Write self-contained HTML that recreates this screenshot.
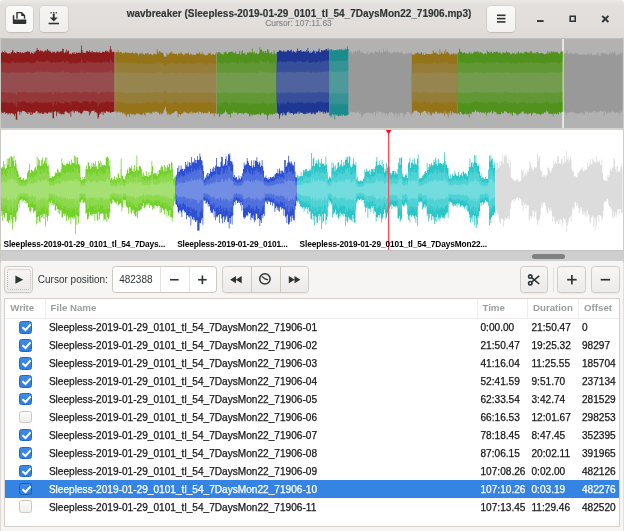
<!DOCTYPE html>
<html><head><meta charset="utf-8"><title>wavbreaker</title>
<style>
html,body{margin:0;padding:0}
body{width:624px;height:531px;overflow:hidden;background:#fff;font-family:"Liberation Sans",sans-serif;color:#2e3436;position:relative}
.win{position:absolute;left:0;top:0;width:624px;height:531px;background:#f6f5f4;will-change:transform;border-radius:4px 4px 0 0;overflow:hidden}
.hdr{position:absolute;left:0;top:0;width:624px;height:38px;background:linear-gradient(#ebe9e6,#e2dfdc 14%,#e1dedb 60%,#dedad7);border-bottom:1px solid #c6bfb8;box-sizing:content-box}
.hb{position:absolute;top:5.5px;height:26px;width:27.7px;box-sizing:border-box;border:0;border-radius:4px;background:linear-gradient(#f6f5f4,#efeeed);box-shadow:0 0 0 .6px rgba(120,105,90,.18),0 1px 1.5px rgba(0,0,0,.10)}
.title{position:absolute;left:0;width:598px;text-align:center;top:8.2px;font-weight:bold;font-size:10px;line-height:11px;white-space:nowrap;-webkit-text-stroke:.15px currentColor}
.sub{position:absolute;left:0;width:597px;text-align:center;top:19.3px;font-size:8.4px;line-height:9px;color:#838686;white-space:nowrap;-webkit-text-stroke:.12px currentColor}
svg{position:absolute;display:block}
.ov{left:0;top:39px}
.sep{position:absolute;left:0;top:127.5px;width:624px;height:2.5px;background:#d6d2ce}
.mainbg{position:absolute;left:1px;top:130px;width:621.5px;height:120.2px;background:#fff;border-right:1px solid #bdbab7}
.lbl{position:absolute;top:239.1px;font-weight:bold;font-size:8.3px;letter-spacing:-.11px;line-height:10px;white-space:nowrap;color:#000}
.sb{position:absolute;left:0;top:250.2px;width:624px;height:11.3px;background:#cecece;border-top:1px solid #c3c3c3;box-sizing:border-box}
.thumb{position:absolute;left:532.3px;top:253.8px;width:32.3px;height:4.8px;border-radius:3px;background:#7e8181}
.tb{position:absolute;left:0;top:261.5px;width:624px;height:37px;background:#f6f5f4}
.btn{position:absolute;top:266.3px;height:26.7px;box-sizing:border-box;border:1px solid #d0cbc6;border-radius:3.5px;background:linear-gradient(#f7f6f5,#edebe9);box-shadow:0 1px 1px rgba(0,0,0,.05)}
.txt{position:absolute;font-size:10px;line-height:12px;white-space:nowrap}
.spin{position:absolute;left:111.5px;top:266.3px;width:105px;height:26.8px;box-sizing:border-box;border:1px solid #cdc7c2;border-radius:3.5px;background:#fff}
.vd{position:absolute;top:0;width:1px;height:100%;background:#e4e1de}
.tbl{position:absolute;left:4.2px;top:297.8px;width:615.4px;height:228.9px;box-sizing:border-box;border:1px solid #d4cfca;background:#fff}
.th{position:absolute;top:301.8px;font-weight:bold;font-size:9.7px;line-height:12px;color:#9a9d9d;white-space:nowrap}
.hl{position:absolute;left:5.2px;top:317.7px;width:613.4px;height:1px;background:#efedeb}
.cd{position:absolute;top:298.8px;width:1px;height:19px;background:#efedeb}
.row{position:absolute;left:5.2px;width:613.4px;height:17.95px;font-size:10.1px;line-height:19.2px;white-space:nowrap;color:#161616;letter-spacing:.01px;-webkit-text-stroke:.25px currentColor}
.row span{position:absolute;top:0}
.row.sel{background:#3584e4;color:#fff}
.cb{left:13.9px;top:2.6px !important;width:12.9px;height:12.7px;box-sizing:border-box;border:1px solid #cdc7c2;border-radius:2.5px;background:linear-gradient(#fbfbfa,#f0efee)}
.cb.on{border-color:#1b6acb;background:linear-gradient(#3f8ae5,#2f7de1)}
.sel .cb.on{border-color:#185fb4}
.cb svg{left:-1px;top:-1px}
.fn{left:43.7px}.tm{left:475.3px}.du{left:526.3px}.of{left:576.8px}
.edge{position:absolute;background:#c9c5c1}
</style></head><body>
<div class="win">
<div class="hdr">
 <div class="hb" style="left:5.5px;background:linear-gradient(#fbfbfa,#f6f6f5)"></div>
 <div class="hb" style="left:40px"></div>
 <div class="hb" style="left:487.4px;background:linear-gradient(#f9f9f8,#f3f2f1)"></div>
 <div class="title">wavbreaker (Sleepless-2019-01-29_0101_tl_54_7DaysMon22_71906.mp3)</div>
 <div class="sub">Cursor: 107:11.63</div>
 <svg width="624" height="38" viewBox="0 0 624 38" style="left:0;top:0">
  <g fill="#2e3436" stroke="none">
   <!-- open icon -->
   <path d="M12.8 15.2h1.5v4.3h12v3.6a1 1 0 0 1-1 1h-11.5a1 1 0 0 1-1-1z"/>
   <path d="M16.3 11.9h5.6l3.3 3.3v3.6h-1.4v-2.9h-2.6v-2.6h-3.5v5.5h-1.4z"/>
   <!-- save icon -->
   <rect x="50.4" y="12.2" width="1.4" height="1.2"/><rect x="53" y="12.2" width="1.4" height="1.2"/><rect x="55.6" y="12.2" width="1.4" height="1.2"/>
   <rect x="52.8" y="13.6" width="1.9" height="5"/>
   <path d="M49.7 17.4h8.1l-4.05 4.2z"/>
   <rect x="48.6" y="22.7" width="10.4" height="1.6"/>
   <!-- menu -->
   <rect x="497" y="14.5" width="8.5" height="1.6"/><rect x="497" y="17.8" width="8.5" height="1.6"/><rect x="497" y="21.1" width="8.5" height="1.6"/>
   <!-- minimize -->
   <rect x="537" y="20.1" width="6.6" height="1.9"/>
   <!-- maximize -->
   <path d="M569.4 15.4h6.6v6.6h-6.6zM571 17v3.4h3.4v-3.4z" fill-rule="evenodd"/>
  </g>
  <path d="M602.2 15.8l6.2 6.2M608.4 15.8l-6.2 6.2" stroke="#2e3436" stroke-width="1.9" fill="none"/>
 </svg>
</div>
<svg class="ov" width="624" height="89" viewBox="0 0 624 89"><rect width="624" height="89" fill="#fff"/><path fill="#cc2728" d="M0 43.4V14.7h.75V13.2h.75V13.9h.75V12.2h.75V13h.75V13.7h.75V11.8h.75V13.6h.75V13.2h.75V14.2h.75V14.6h.75V14.4h.75V13.9h.75V15.3h.75V13.4h.75V13.3h.75V11.3h.75V11.6h.75V14.1h.75V13h.75V14.1h.75V14.3h.75V12.5h.75V13h.75V13.1h.75V12.9h.75V14h.75V13.1h.75V14.2h.75V12.9h.75V13.9h.75V13.7h.75V13.6h.75V13.4h.75V12.7h.75V13h.75V12.3h.75V12.5h.75V12.8h.75V12.7h.75V14.7h.75V13.6h.75V13.4h.75V14.2h.75V14.7h.75V12.4h.75V14h.75V12.2h.75V11.8h.75V9.1h.75V10.9h.75V10.8h.75V12.5h.75V11.4h.75V11.3h.75V12.2h.75V11.8h.75V13.3h.75V12.3h.75V12.2h.75V11.3h.75V12.6h.75V11.2h.75V10.1h.75V11.8h.75V11.4h.75V12.5h.75V12.6h.75V13.8h.75V13.8h.75V12.3h.75V12.9h.75V12.8h.75V13.5h.75V14.2h.75V12.7h.75V12.3h.75V12.4h.75V13.5h.75V12.7h.75V12.6h.75V12.4h.75V11.9h.75V9.8h.75V10.1h.75V13.7h.75V14h.75V12.5h.75V10.4h.75V13.3h.75V12h.75V11.6h.75V15.2h.75V14.2h.75V14.4h.75V15.3h.75V13.7h.75V13.2h.75V15h.75V13.2h.75V15h.75V13.6h.75V13.4h.75V14.3h.75V13.7h.75V13.2h.75V14h.75V13.7h.75V6.6h.75V11h.75V13.6h.75V13.8h.75V14.1h.75V13.5h.75V13.9h.75V11.8h.75V11.9h.75V12.6h.75V12.9h.75V11.6h.75V13.3h.75V12.4h.75V13.5h.75V12.1h.75V12.9h.75V13.6h.75V13.1h.75V13.4h.75V12.4h.75V13.6h.75V13.2h.75V13.5h.75V12.5h.75V13.9h.75V13.6h.75V14.1h.75V13h.75V12.4h.75V13h.75V13.2h.75V12.1h.75V11.6h.75V13h.75V12h.75V12.6h.75V13.8h.75V10.4h.75V7h.75V10.5h.75V12.8h.75V13.2h.75V12.6h.75V12.9h.75V43.4V72.8h-.75V72.8h-.75V73.1h-.75V73.1h-.75V73.3h-.75V74.1h-.75V73.5h-.75V72.5h-.75V73.3h-.75V72.8h-.75V72.3h-.75V72.2h-.75V73.9h-.75V73.7h-.75V72.6h-.75V76.1h-.75V73.2h-.75V72.8h-.75V74.9h-.75V73.7h-.75V75.8h-.75V78.2h-.75V79.7h-.75V74.4h-.75V73.5h-.75V73h-.75V73.4h-.75V71.3h-.75V72.1h-.75V71.8h-.75V72.1h-.75V72.7h-.75V74.4h-.75V76.3h-.75V72.8h-.75V72.6h-.75V72.1h-.75V72.1h-.75V71.7h-.75V72h-.75V71.6h-.75V71.8h-.75V73.4h-.75V73.7h-.75V74.9h-.75V74.6h-.75V74h-.75V73.1h-.75V73.6h-.75V71.8h-.75V73h-.75V71.8h-.75V71.9h-.75V73.8h-.75V71.8h-.75V73.3h-.75V71.6h-.75V72.3h-.75V77.8h-.75V72.7h-.75V74.8h-.75V74.2h-.75V73.7h-.75V73.5h-.75V72.5h-.75V72.5h-.75V72.8h-.75V75.4h-.75V75.2h-.75V74.7h-.75V75.2h-.75V75.6h-.75V74.5h-.75V74.7h-.75V72.4h-.75V74.2h-.75V73.3h-.75V77.3h-.75V72.5h-.75V71.9h-.75V72.9h-.75V79.5h-.75V79.1h-.75V72.5h-.75V73.7h-.75V73.9h-.75V72.8h-.75V73.6h-.75V73.4h-.75V74.4h-.75V74.7h-.75V73.8h-.75V73.5h-.75V73.5h-.75V74.7h-.75V74.9h-.75V74.7h-.75V73.5h-.75V74.8h-.75V74h-.75V74.5h-.75V73.3h-.75V74.4h-.75V72.1h-.75V72.2h-.75V72.8h-.75V74h-.75V74.1h-.75V73.4h-.75V74.8h-.75V76.1h-.75V73h-.75V75.9h-.75V73.4h-.75V74.5h-.75V73.1h-.75V75.1h-.75V74.3h-.75V72.9h-.75V73.1h-.75V71.9h-.75V71.9h-.75V71.8h-.75V72.3h-.75V73.5h-.75V72.8h-.75V75.7h-.75V72.8h-.75V72.2h-.75V72.7h-.75V81h-.75V80.4h-.75V74.4h-.75V77.3h-.75V75.6h-.75V74.7h-.75V74.5h-.75V73.9h-.75V74.4h-.75V75.5h-.75V74.1h-.75V74.4h-.75V75.5h-.75V74h-.75V74h-.75V74.9h-.75V73.2h-.75V72.9h-.75V74.3h-.75V74.1h-.75V72.8h-.75V74.4h-.75V72.7h-.75Z"/><path fill="#d64f51" d="M0 43.4V24.5h.75V23.5h.75V23.9h.75V22.8h.75V23.3h.75V23.8h.75V22.5h.75V23.7h.75V23.5h.75V24.2h.75V24.4h.75V24.3h.75V23.9h.75V24.9h.75V23.6h.75V23.5h.75V22.2h.75V22.4h.75V24.1h.75V23.3h.75V24.1h.75V24.2h.75V23h.75V23.4h.75V23.4h.75V23.3h.75V24h.75V23.4h.75V24.1h.75V23.3h.75V24h.75V23.8h.75V23.7h.75V23.6h.75V23.2h.75V23.3h.75V22.8h.75V23h.75V23.2h.75V23.1h.75V24.4h.75V23.8h.75V23.6h.75V24.1h.75V24.4h.75V22.9h.75V24h.75V22.8h.75V22.6h.75V20.7h.75V21.9h.75V21.9h.75V23h.75V22.3h.75V22.2h.75V22.8h.75V22.5h.75V23.6h.75V22.9h.75V22.8h.75V22.2h.75V23.1h.75V22.1h.75V21.4h.75V22.6h.75V22.3h.75V23h.75V23.1h.75V23.9h.75V23.9h.75V22.9h.75V23.3h.75V23.2h.75V23.7h.75V24.1h.75V23.1h.75V22.9h.75V23h.75V23.6h.75V23.2h.75V23.1h.75V23h.75V22.6h.75V21.3h.75V21.4h.75V23.8h.75V24h.75V23h.75V21.6h.75V23.5h.75V22.7h.75V22.4h.75V24.8h.75V24.1h.75V24.3h.75V24.9h.75V23.8h.75V23.5h.75V24.7h.75V23.5h.75V24.7h.75V23.7h.75V23.6h.75V24.2h.75V23.8h.75V23.5h.75V24h.75V23.8h.75V19.1h.75V22h.75V23.7h.75V23.9h.75V24.1h.75V23.7h.75V24h.75V22.5h.75V22.6h.75V23h.75V23.2h.75V22.4h.75V23.5h.75V22.9h.75V23.7h.75V22.8h.75V23.3h.75V23.7h.75V23.4h.75V23.6h.75V22.9h.75V23.7h.75V23.4h.75V23.6h.75V23h.75V24h.75V23.7h.75V24.1h.75V23.3h.75V22.9h.75V23.3h.75V23.5h.75V22.7h.75V22.4h.75V23.3h.75V22.7h.75V23.1h.75V23.9h.75V21.6h.75V19.4h.75V21.7h.75V23.2h.75V23.5h.75V23.1h.75V23.2h.75V43.4V62.8h-.75V62.8h-.75V63h-.75V63h-.75V63.1h-.75V63.7h-.75V63.3h-.75V62.6h-.75V63.1h-.75V62.8h-.75V62.4h-.75V62.4h-.75V63.5h-.75V63.4h-.75V62.7h-.75V65h-.75V63h-.75V62.8h-.75V64.2h-.75V63.4h-.75V64.8h-.75V66.4h-.75V67.4h-.75V63.9h-.75V63.3h-.75V62.9h-.75V63.2h-.75V61.8h-.75V62.3h-.75V62.1h-.75V62.4h-.75V62.8h-.75V63.9h-.75V65.1h-.75V62.8h-.75V62.6h-.75V62.3h-.75V62.3h-.75V62.1h-.75V62.3h-.75V62h-.75V62.2h-.75V63.2h-.75V63.4h-.75V64.2h-.75V64h-.75V63.6h-.75V63h-.75V63.3h-.75V62.2h-.75V62.9h-.75V62.1h-.75V62.2h-.75V63.5h-.75V62.1h-.75V63.1h-.75V62h-.75V62.5h-.75V66.1h-.75V62.8h-.75V64.1h-.75V63.7h-.75V63.4h-.75V63.3h-.75V62.6h-.75V62.6h-.75V62.8h-.75V64.5h-.75V64.4h-.75V64.1h-.75V64.4h-.75V64.6h-.75V63.9h-.75V64h-.75V62.6h-.75V63.7h-.75V63.1h-.75V65.8h-.75V62.6h-.75V62.2h-.75V62.8h-.75V67.2h-.75V66.9h-.75V62.6h-.75V63.4h-.75V63.5h-.75V62.8h-.75V63.4h-.75V63.2h-.75V63.9h-.75V64.1h-.75V63.5h-.75V63.3h-.75V63.3h-.75V64.1h-.75V64.2h-.75V64.1h-.75V63.3h-.75V64.1h-.75V63.6h-.75V63.9h-.75V63.1h-.75V63.9h-.75V62.4h-.75V62.4h-.75V62.8h-.75V63.6h-.75V63.6h-.75V63.2h-.75V64.1h-.75V65h-.75V62.9h-.75V64.8h-.75V63.2h-.75V63.9h-.75V63h-.75V64.3h-.75V63.8h-.75V62.9h-.75V63h-.75V62.2h-.75V62.2h-.75V62.2h-.75V62.5h-.75V63.2h-.75V62.8h-.75V64.7h-.75V62.8h-.75V62.4h-.75V62.8h-.75V68.2h-.75V67.8h-.75V63.8h-.75V65.8h-.75V64.7h-.75V64.1h-.75V63.9h-.75V63.5h-.75V63.8h-.75V64.6h-.75V63.7h-.75V63.9h-.75V64.6h-.75V63.6h-.75V63.6h-.75V64.2h-.75V63.1h-.75V62.8h-.75V63.8h-.75V63.6h-.75V62.8h-.75V63.8h-.75V62.7h-.75Z"/><path fill="#d66f72" d="M0 43.4V33.9h.75V33.4h.75V33.6h.75V33.1h.75V33.4h.75V33.6h.75V33h.75V33.6h.75V33.4h.75V33.8h.75V33.9h.75V33.8h.75V33.7h.75V34.1h.75V33.5h.75V33.5h.75V32.8h.75V32.9h.75V33.7h.75V33.4h.75V33.7h.75V33.8h.75V33.2h.75V33.4h.75V33.4h.75V33.3h.75V33.7h.75V33.4h.75V33.8h.75V33.3h.75V33.7h.75V33.6h.75V33.6h.75V33.5h.75V33.3h.75V33.4h.75V33.1h.75V33.2h.75V33.3h.75V33.3h.75V33.9h.75V33.6h.75V33.5h.75V33.7h.75V33.9h.75V33.2h.75V33.7h.75V33.1h.75V33h.75V32.1h.75V32.7h.75V32.6h.75V33.2h.75V32.9h.75V32.8h.75V33.1h.75V33h.75V33.5h.75V33.1h.75V33.1h.75V32.8h.75V33.2h.75V32.8h.75V32.4h.75V33h.75V32.8h.75V33.2h.75V33.2h.75V33.6h.75V33.6h.75V33.1h.75V33.3h.75V33.3h.75V33.5h.75V33.8h.75V33.3h.75V33.1h.75V33.2h.75V33.5h.75V33.3h.75V33.2h.75V33.2h.75V33h.75V32.3h.75V32.4h.75V33.6h.75V33.7h.75V33.2h.75V32.5h.75V33.5h.75V33.1h.75V32.9h.75V34.1h.75V33.8h.75V33.8h.75V34.1h.75V33.6h.75V33.4h.75V34h.75V33.4h.75V34h.75V33.5h.75V33.5h.75V33.8h.75V33.6h.75V33.4h.75V33.7h.75V33.6h.75V31.3h.75V32.7h.75V33.6h.75V33.6h.75V33.7h.75V33.5h.75V33.7h.75V33h.75V33h.75V33.2h.75V33.3h.75V32.9h.75V33.5h.75V33.2h.75V33.5h.75V33.1h.75V33.4h.75V33.6h.75V33.4h.75V33.5h.75V33.2h.75V33.6h.75V33.4h.75V33.5h.75V33.2h.75V33.7h.75V33.6h.75V33.7h.75V33.4h.75V33.2h.75V33.4h.75V33.4h.75V33.1h.75V32.9h.75V33.4h.75V33h.75V33.2h.75V33.6h.75V32.5h.75V31.4h.75V32.6h.75V33.3h.75V33.4h.75V33.2h.75V33.3h.75V43.4V53.1h-.75V53.1h-.75V53.2h-.75V53.2h-.75V53.3h-.75V53.5h-.75V53.3h-.75V53h-.75V53.3h-.75V53.1h-.75V52.9h-.75V52.9h-.75V53.5h-.75V53.4h-.75V53h-.75V54.2h-.75V53.2h-.75V53.1h-.75V53.8h-.75V53.4h-.75V54.1h-.75V54.9h-.75V55.4h-.75V53.6h-.75V53.3h-.75V53.2h-.75V53.3h-.75V52.6h-.75V52.9h-.75V52.8h-.75V52.9h-.75V53.1h-.75V53.6h-.75V54.2h-.75V53.1h-.75V53h-.75V52.9h-.75V52.9h-.75V52.7h-.75V52.8h-.75V52.7h-.75V52.8h-.75V53.3h-.75V53.4h-.75V53.8h-.75V53.7h-.75V53.5h-.75V53.2h-.75V53.4h-.75V52.8h-.75V53.2h-.75V52.8h-.75V52.8h-.75V53.4h-.75V52.8h-.75V53.3h-.75V52.7h-.75V52.9h-.75V54.8h-.75V53.1h-.75V53.8h-.75V53.6h-.75V53.4h-.75V53.3h-.75V53h-.75V53h-.75V53.1h-.75V54h-.75V53.9h-.75V53.7h-.75V53.9h-.75V54h-.75V53.7h-.75V53.7h-.75V53h-.75V53.6h-.75V53.3h-.75V54.6h-.75V53h-.75V52.8h-.75V53.1h-.75V55.3h-.75V55.2h-.75V53h-.75V53.4h-.75V53.5h-.75V53.1h-.75V53.4h-.75V53.3h-.75V53.6h-.75V53.7h-.75V53.4h-.75V53.3h-.75V53.3h-.75V53.7h-.75V53.8h-.75V53.7h-.75V53.3h-.75V53.8h-.75V53.5h-.75V53.7h-.75V53.3h-.75V53.6h-.75V52.9h-.75V52.9h-.75V53.1h-.75V53.5h-.75V53.5h-.75V53.3h-.75V53.7h-.75V54.2h-.75V53.2h-.75V54.1h-.75V53.3h-.75V53.7h-.75V53.2h-.75V53.9h-.75V53.6h-.75V53.1h-.75V53.2h-.75V52.8h-.75V52.8h-.75V52.8h-.75V53h-.75V53.3h-.75V53.1h-.75V54.1h-.75V53.1h-.75V52.9h-.75V53.1h-.75V55.8h-.75V55.6h-.75V53.6h-.75V54.6h-.75V54h-.75V53.7h-.75V53.7h-.75V53.5h-.75V53.6h-.75V54h-.75V53.5h-.75V53.6h-.75V54h-.75V53.5h-.75V53.5h-.75V53.8h-.75V53.2h-.75V53.1h-.75V53.6h-.75V53.5h-.75V53.1h-.75V53.6h-.75V53.1h-.75Z"/><path fill="#d6a624" d="M114.75 43.4V14.8h.75V12.6h.75V13.6h.75V12.9h.75V10.8h.75V12.9h.75V14h.75V12.9h.75V13.1h.75V13.8h.75V14.4h.75V13.7h.75V14.3h.75V13.7h.75V13h.75V13.6h.75V13.9h.75V13.6h.75V13.8h.75V14.2h.75V13.8h.75V14.2h.75V14h.75V13h.75V14.1h.75V14.6h.75V14.6h.75V13.7h.75V13.4h.75V14.3h.75V14.4h.75V16.3h.75V15.3h.75V14.2h.75V14.2h.75V14.3h.75V13.3h.75V15.4h.75V14.9h.75V15.9h.75V14.4h.75V14.3h.75V14.7h.75V14h.75V14.1h.75V15.8h.75V15h.75V14.6h.75V15h.75V15.7h.75V16.3h.75V15.2h.75V14.1h.75V15h.75V15.3h.75V15.4h.75V10h.75V12.8h.75V14.3h.75V12.1h.75V12.6h.75V13.7h.75V13.3h.75V13.9h.75V14.2h.75V16.5h.75V17.8h.75V17.4h.75V17.7h.75V13.9h.75V15.5h.75V15.8h.75V13.9h.75V14.5h.75V13.2h.75V12.4h.75V14.7h.75V13.6h.75V14.6h.75V14.8h.75V15.1h.75V14.9h.75V14.6h.75V16.2h.75V15.1h.75V13.8h.75V14.7h.75V14.4h.75V12.9h.75V14.8h.75V15h.75V16.2h.75V15.1h.75V15.8h.75V14.1h.75V14.4h.75V14.2h.75V15h.75V13.6h.75V15.4h.75V15.8h.75V14.2h.75V15.2h.75V16.2h.75V15.4h.75V15.6h.75V15.9h.75V16.1h.75V15.2h.75V14h.75V14.4h.75V15.1h.75V13.3h.75V14h.75V15.2h.75V15h.75V13.1h.75V15.5h.75V14.7h.75V15.6h.75V16.6h.75V16.2h.75V15.8h.75V16.2h.75V14.4h.75V14.3h.75V14.3h.75V13.7h.75V15.4h.75V16.3h.75V14.7h.75V15.1h.75V16.1h.75V16.1h.75V14.5h.75V12.8h.75V43.4V74.7h-.75V74.1h-.75V74.8h-.75V77.6h-.75V74.3h-.75V74.6h-.75V74h-.75V74.7h-.75V75.1h-.75V72.9h-.75V72.6h-.75V73.8h-.75V74.2h-.75V73.9h-.75V74.6h-.75V73.7h-.75V74.1h-.75V74.5h-.75V74.2h-.75V73h-.75V74.6h-.75V73h-.75V73.3h-.75V72.6h-.75V74.6h-.75V73.1h-.75V73.5h-.75V73.9h-.75V73.9h-.75V73.5h-.75V73.4h-.75V74.5h-.75V73.8h-.75V72.6h-.75V74.7h-.75V72.9h-.75V74.3h-.75V74.4h-.75V74.7h-.75V73.7h-.75V74.1h-.75V72.9h-.75V73.6h-.75V72.5h-.75V73.4h-.75V74.7h-.75V74.5h-.75V74.9h-.75V76.4h-.75V74.9h-.75V75.1h-.75V78.3h-.75V73.4h-.75V72h-.75V72.1h-.75V72.5h-.75V73.1h-.75V73.8h-.75V74.1h-.75V74.5h-.75V75h-.75V75.9h-.75V74.8h-.75V75.9h-.75V74.6h-.75V75.8h-.75V73.5h-.75V71.7h-.75V67.9h-.75V69.7h-.75V71.7h-.75V73.9h-.75V74.8h-.75V75.4h-.75V73.6h-.75V75h-.75V75.6h-.75V73.7h-.75V73.5h-.75V72.6h-.75V72.9h-.75V72.8h-.75V72.8h-.75V74.2h-.75V72.7h-.75V72.7h-.75V74.8h-.75V74.6h-.75V73.9h-.75V74.6h-.75V72.9h-.75V74h-.75V73.5h-.75V74h-.75V73.3h-.75V76.9h-.75V75.6h-.75V73.9h-.75V75.7h-.75V75h-.75V76.2h-.75V75.4h-.75V75.8h-.75V75.1h-.75V74.5h-.75V74.7h-.75V74.2h-.75V74.8h-.75V75.7h-.75V76.2h-.75V75.2h-.75V75.1h-.75V75.6h-.75V75.8h-.75V74.2h-.75V75h-.75V78h-.75V75.2h-.75V74.4h-.75V76h-.75V77.7h-.75V75.4h-.75V75.6h-.75V73.4h-.75V74.3h-.75V75.1h-.75V73.2h-.75V72.9h-.75V73.7h-.75V73.5h-.75V72.6h-.75V72.5h-.75V73.4h-.75V73.5h-.75V72.5h-.75V72.2h-.75Z"/><path fill="#d6b44f" d="M114.75 43.4V24.5h.75V23.1h.75V23.7h.75V23.3h.75V21.9h.75V23.3h.75V24h.75V23.2h.75V23.4h.75V23.9h.75V24.3h.75V23.8h.75V24.2h.75V23.8h.75V23.3h.75V23.8h.75V23.9h.75V23.7h.75V23.8h.75V24.1h.75V23.9h.75V24.1h.75V24h.75V23.4h.75V24.1h.75V24.4h.75V24.4h.75V23.8h.75V23.6h.75V24.2h.75V24.3h.75V25.5h.75V24.8h.75V24.1h.75V24.1h.75V24.2h.75V23.5h.75V24.9h.75V24.6h.75V25.2h.75V24.3h.75V24.2h.75V24.4h.75V24h.75V24.1h.75V25.2h.75V24.7h.75V24.4h.75V24.6h.75V25.1h.75V25.5h.75V24.8h.75V24.1h.75V24.6h.75V24.9h.75V24.9h.75V21.3h.75V23.2h.75V24.2h.75V22.7h.75V23.1h.75V23.8h.75V23.5h.75V23.9h.75V24.1h.75V25.6h.75V26.5h.75V26.2h.75V26.4h.75V23.9h.75V25h.75V25.2h.75V23.9h.75V24.3h.75V23.5h.75V23h.75V24.4h.75V23.7h.75V24.4h.75V24.5h.75V24.7h.75V24.6h.75V24.4h.75V25.4h.75V24.7h.75V23.9h.75V24.5h.75V24.3h.75V23.3h.75V24.5h.75V24.6h.75V25.4h.75V24.7h.75V25.2h.75V24.1h.75V24.2h.75V24.1h.75V24.6h.75V23.8h.75V24.9h.75V25.2h.75V24.2h.75V24.8h.75V25.4h.75V24.9h.75V25.1h.75V25.2h.75V25.4h.75V24.8h.75V24h.75V24.3h.75V24.7h.75V23.6h.75V24h.75V24.8h.75V24.7h.75V23.4h.75V25h.75V24.4h.75V25h.75V25.7h.75V25.5h.75V25.2h.75V25.5h.75V24.2h.75V24.2h.75V24.2h.75V23.8h.75V24.9h.75V25.5h.75V24.4h.75V24.7h.75V25.4h.75V25.4h.75V24.3h.75V23.2h.75V43.4V64.1h-.75V63.7h-.75V64.1h-.75V66h-.75V63.8h-.75V64h-.75V63.6h-.75V64.1h-.75V64.3h-.75V62.8h-.75V62.7h-.75V63.5h-.75V63.7h-.75V63.5h-.75V64h-.75V63.4h-.75V63.6h-.75V63.9h-.75V63.8h-.75V63h-.75V64h-.75V62.9h-.75V63.1h-.75V62.7h-.75V64h-.75V63h-.75V63.3h-.75V63.5h-.75V63.5h-.75V63.3h-.75V63.2h-.75V63.9h-.75V63.5h-.75V62.7h-.75V64.1h-.75V62.9h-.75V63.8h-.75V63.8h-.75V64.1h-.75V63.4h-.75V63.7h-.75V62.9h-.75V63.3h-.75V62.6h-.75V63.2h-.75V64h-.75V63.9h-.75V64.2h-.75V65.2h-.75V64.2h-.75V64.3h-.75V66.4h-.75V63.2h-.75V62.3h-.75V62.3h-.75V62.6h-.75V63h-.75V63.5h-.75V63.7h-.75V63.9h-.75V64.2h-.75V64.8h-.75V64.1h-.75V64.9h-.75V64h-.75V64.8h-.75V63.3h-.75V62.1h-.75V59.6h-.75V60.7h-.75V62.1h-.75V63.5h-.75V64.1h-.75V64.5h-.75V63.4h-.75V64.3h-.75V64.7h-.75V63.4h-.75V63.3h-.75V62.7h-.75V62.9h-.75V62.8h-.75V62.8h-.75V63.7h-.75V62.7h-.75V62.7h-.75V64.1h-.75V64h-.75V63.5h-.75V64h-.75V62.9h-.75V63.6h-.75V63.2h-.75V63.6h-.75V63.1h-.75V65.5h-.75V64.6h-.75V63.6h-.75V64.7h-.75V64.3h-.75V65h-.75V64.5h-.75V64.8h-.75V64.3h-.75V63.9h-.75V64.1h-.75V63.7h-.75V64.1h-.75V64.7h-.75V65.1h-.75V64.4h-.75V64.3h-.75V64.6h-.75V64.8h-.75V63.7h-.75V64.3h-.75V66.2h-.75V64.4h-.75V63.9h-.75V64.9h-.75V66h-.75V64.5h-.75V64.6h-.75V63.2h-.75V63.8h-.75V64.3h-.75V63.1h-.75V62.9h-.75V63.4h-.75V63.3h-.75V62.7h-.75V62.6h-.75V63.2h-.75V63.3h-.75V62.6h-.75V62.4h-.75Z"/><path fill="#d8bf72" d="M114.75 43.4V34h.75V33.2h.75V33.6h.75V33.3h.75V32.7h.75V33.3h.75V33.7h.75V33.3h.75V33.4h.75V33.6h.75V33.8h.75V33.6h.75V33.8h.75V33.6h.75V33.4h.75V33.6h.75V33.7h.75V33.6h.75V33.6h.75V33.7h.75V33.6h.75V33.8h.75V33.7h.75V33.4h.75V33.7h.75V33.9h.75V33.9h.75V33.6h.75V33.5h.75V33.8h.75V33.8h.75V34.4h.75V34.1h.75V33.8h.75V33.8h.75V33.8h.75V33.5h.75V34.2h.75V34h.75V34.3h.75V33.8h.75V33.8h.75V33.9h.75V33.7h.75V33.7h.75V34.3h.75V34h.75V33.9h.75V34h.75V34.3h.75V34.5h.75V34.1h.75V33.7h.75V34h.75V34.1h.75V34.2h.75V32.4h.75V33.3h.75V33.8h.75V33.1h.75V33.2h.75V33.6h.75V33.5h.75V33.7h.75V33.7h.75V34.5h.75V34.9h.75V34.8h.75V34.9h.75V33.7h.75V34.2h.75V34.3h.75V33.7h.75V33.9h.75V33.4h.75V33.2h.75V33.9h.75V33.6h.75V33.9h.75V34h.75V34.1h.75V34h.75V33.9h.75V34.4h.75V34.1h.75V33.6h.75V33.9h.75V33.8h.75V33.3h.75V34h.75V34h.75V34.4h.75V34.1h.75V34.3h.75V33.7h.75V33.8h.75V33.7h.75V34h.75V33.6h.75V34.2h.75V34.3h.75V33.8h.75V34.1h.75V34.4h.75V34.1h.75V34.2h.75V34.3h.75V34.4h.75V34.1h.75V33.7h.75V33.8h.75V34.1h.75V33.5h.75V33.7h.75V34.1h.75V34h.75V33.4h.75V34.2h.75V33.9h.75V34.2h.75V34.6h.75V34.4h.75V34.3h.75V34.4h.75V33.8h.75V33.8h.75V33.8h.75V33.6h.75V34.2h.75V34.5h.75V33.9h.75V34h.75V34.4h.75V34.4h.75V33.9h.75V33.3h.75V43.4V53.7h-.75V53.5h-.75V53.8h-.75V54.7h-.75V53.6h-.75V53.7h-.75V53.5h-.75V53.7h-.75V53.9h-.75V53.1h-.75V53h-.75V53.4h-.75V53.6h-.75V53.5h-.75V53.7h-.75V53.4h-.75V53.5h-.75V53.7h-.75V53.6h-.75V53.2h-.75V53.7h-.75V53.2h-.75V53.3h-.75V53h-.75V53.7h-.75V53.2h-.75V53.3h-.75V53.5h-.75V53.5h-.75V53.3h-.75V53.3h-.75V53.6h-.75V53.4h-.75V53h-.75V53.7h-.75V53.1h-.75V53.6h-.75V53.6h-.75V53.7h-.75V53.4h-.75V53.5h-.75V53.1h-.75V53.4h-.75V53h-.75V53.3h-.75V53.7h-.75V53.6h-.75V53.8h-.75V54.3h-.75V53.8h-.75V53.8h-.75V54.9h-.75V53.3h-.75V52.8h-.75V52.9h-.75V53h-.75V53.2h-.75V53.4h-.75V53.5h-.75V53.7h-.75V53.8h-.75V54.1h-.75V53.8h-.75V54.1h-.75V53.7h-.75V54.1h-.75V53.3h-.75V52.7h-.75V51.5h-.75V52.1h-.75V52.8h-.75V53.5h-.75V53.8h-.75V54h-.75V53.4h-.75V53.8h-.75V54h-.75V53.4h-.75V53.3h-.75V53h-.75V53.1h-.75V53.1h-.75V53.1h-.75V53.6h-.75V53.1h-.75V53.1h-.75V53.8h-.75V53.7h-.75V53.5h-.75V53.7h-.75V53.1h-.75V53.5h-.75V53.3h-.75V53.5h-.75V53.3h-.75V54.5h-.75V54h-.75V53.5h-.75V54h-.75V53.8h-.75V54.2h-.75V54h-.75V54.1h-.75V53.9h-.75V53.7h-.75V53.7h-.75V53.6h-.75V53.8h-.75V54.1h-.75V54.2h-.75V53.9h-.75V53.9h-.75V54h-.75V54.1h-.75V53.6h-.75V53.8h-.75V54.8h-.75V53.9h-.75V53.6h-.75V54.1h-.75V54.7h-.75V53.9h-.75V54h-.75V53.3h-.75V53.6h-.75V53.8h-.75V53.2h-.75V53.1h-.75V53.4h-.75V53.3h-.75V53h-.75V53h-.75V53.3h-.75V53.3h-.75V53h-.75V52.9h-.75Z"/><path fill="#74d02a" d="M216.75 43.4V14.6h.75V13.4h.75V12.9h.75V12.9h.75V14.4h.75V13.5h.75V14.9h.75V15h.75V15.9h.75V13.4h.75V13.4h.75V12.7h.75V12.5h.75V14.6h.75V14.9h.75V13.4h.75V12.9h.75V13.3h.75V12.9h.75V12.4h.75V12.2h.75V13.5h.75V13.4h.75V14.3h.75V13.7h.75V11.9h.75V14.8h.75V14.9h.75V15h.75V14.7h.75V11.8h.75V15.7h.75V12.2h.75V14.5h.75V11.3h.75V14h.75V15h.75V13.5h.75V15.6h.75V15.8h.75V13.9h.75V13.1h.75V14.1h.75V13.2h.75V12.6h.75V13.7h.75V13.5h.75V9.5h.75V13h.75V14.5h.75V12.7h.75V14.7h.75V13.8h.75V14.1h.75V15.6h.75V15h.75V14h.75V8.3h.75V10.8h.75V10.6h.75V11.4h.75V13.1h.75V12.3h.75V13.7h.75V11.9h.75V12.3h.75V13.9h.75V10.3h.75V10.4h.75V12.4h.75V14.6h.75V14.2h.75V13.4h.75V13.1h.75V15.5h.75V14.8h.75V11.8h.75V14.3h.75V15.2h.75V14.8h.75V43.4V74.2h-.75V73.9h-.75V75.1h-.75V75.3h-.75V74.4h-.75V75.9h-.75V74.7h-.75V75.2h-.75V75.9h-.75V74.4h-.75V76h-.75V76.8h-.75V80.9h-.75V76.2h-.75V75.6h-.75V75h-.75V75.7h-.75V74.2h-.75V74.4h-.75V73.8h-.75V74.8h-.75V76.3h-.75V75.7h-.75V74.5h-.75V75.4h-.75V75.1h-.75V75h-.75V76.1h-.75V75.4h-.75V76.1h-.75V75.7h-.75V75h-.75V76.8h-.75V76.1h-.75V74.7h-.75V77.2h-.75V77.4h-.75V74.8h-.75V75.3h-.75V73.9h-.75V73.8h-.75V73.6h-.75V74.2h-.75V74.2h-.75V75.2h-.75V73.9h-.75V75.5h-.75V74.1h-.75V74.1h-.75V73.9h-.75V74.8h-.75V74h-.75V75.4h-.75V73.7h-.75V73.8h-.75V73.6h-.75V73.7h-.75V72.4h-.75V73.9h-.75V74.7h-.75V74.1h-.75V78.6h-.75V74.9h-.75V75.6h-.75V75.6h-.75V75.2h-.75V73.6h-.75V73h-.75V71.6h-.75V73.4h-.75V74.3h-.75V74.5h-.75V75.3h-.75V75.4h-.75V74.4h-.75V76.7h-.75V78h-.75V74.1h-.75V75.4h-.75V75.3h-.75Z"/><path fill="#8dd94e" d="M216.75 43.4V24.4h.75V23.6h.75V23.3h.75V23.3h.75V24.2h.75V23.7h.75V24.6h.75V24.7h.75V25.2h.75V23.6h.75V23.6h.75V23.2h.75V23h.75V24.4h.75V24.6h.75V23.6h.75V23.3h.75V23.5h.75V23.3h.75V22.9h.75V22.8h.75V23.7h.75V23.6h.75V24.2h.75V23.8h.75V22.6h.75V24.5h.75V24.6h.75V24.7h.75V24.4h.75V22.6h.75V25.1h.75V22.8h.75V24.4h.75V22.2h.75V24h.75V24.7h.75V23.6h.75V25.1h.75V25.2h.75V24h.75V23.4h.75V24.1h.75V23.5h.75V23.1h.75V23.8h.75V23.7h.75V21h.75V23.3h.75V24.3h.75V23.2h.75V24.5h.75V23.9h.75V24h.75V25h.75V24.6h.75V24h.75V20.2h.75V21.9h.75V21.8h.75V22.3h.75V23.4h.75V22.9h.75V23.8h.75V22.6h.75V22.8h.75V23.9h.75V21.5h.75V21.6h.75V22.9h.75V24.4h.75V24.1h.75V23.6h.75V23.4h.75V25h.75V24.5h.75V22.5h.75V24.2h.75V24.8h.75V24.5h.75V43.4V63.7h-.75V63.5h-.75V64.3h-.75V64.5h-.75V63.9h-.75V64.8h-.75V64.1h-.75V64.4h-.75V64.9h-.75V63.8h-.75V64.9h-.75V65.5h-.75V68.1h-.75V65.1h-.75V64.7h-.75V64.3h-.75V64.7h-.75V63.8h-.75V63.9h-.75V63.5h-.75V64.1h-.75V65.1h-.75V64.7h-.75V63.9h-.75V64.5h-.75V64.3h-.75V64.3h-.75V65h-.75V64.5h-.75V65h-.75V64.7h-.75V64.2h-.75V65.5h-.75V65h-.75V64h-.75V65.7h-.75V65.9h-.75V64.1h-.75V64.4h-.75V63.5h-.75V63.5h-.75V63.3h-.75V63.7h-.75V63.8h-.75V64.4h-.75V63.5h-.75V64.6h-.75V63.7h-.75V63.7h-.75V63.5h-.75V64.1h-.75V63.6h-.75V64.5h-.75V63.4h-.75V63.5h-.75V63.3h-.75V63.4h-.75V62.6h-.75V63.5h-.75V64.1h-.75V63.7h-.75V66.6h-.75V64.2h-.75V64.7h-.75V64.6h-.75V64.4h-.75V63.3h-.75V63h-.75V62h-.75V63.2h-.75V63.8h-.75V63.9h-.75V64.5h-.75V64.5h-.75V63.8h-.75V65.4h-.75V66.2h-.75V63.7h-.75V64.5h-.75V64.4h-.75Z"/><path fill="#a5e072" d="M216.75 43.4V33.9h.75V33.5h.75V33.3h.75V33.3h.75V33.8h.75V33.5h.75V34h.75V34h.75V34.3h.75V33.5h.75V33.5h.75V33.3h.75V33.2h.75V33.9h.75V34h.75V33.5h.75V33.3h.75V33.5h.75V33.3h.75V33.2h.75V33.1h.75V33.5h.75V33.5h.75V33.8h.75V33.6h.75V33h.75V34h.75V34h.75V34h.75V33.9h.75V33h.75V34.3h.75V33.1h.75V33.9h.75V32.8h.75V33.7h.75V34h.75V33.5h.75V34.2h.75V34.3h.75V33.7h.75V33.4h.75V33.7h.75V33.4h.75V33.3h.75V33.6h.75V33.5h.75V32.2h.75V33.4h.75V33.9h.75V33.3h.75V33.9h.75V33.6h.75V33.7h.75V34.2h.75V34h.75V33.7h.75V31.8h.75V32.6h.75V32.6h.75V32.8h.75V33.4h.75V33.2h.75V33.6h.75V33h.75V33.1h.75V33.7h.75V32.5h.75V32.5h.75V33.2h.75V33.9h.75V33.8h.75V33.5h.75V33.4h.75V34.2h.75V34h.75V33h.75V33.8h.75V34.1h.75V34h.75V43.4V53.6h-.75V53.5h-.75V53.9h-.75V53.9h-.75V53.6h-.75V54.1h-.75V53.7h-.75V53.9h-.75V54.1h-.75V53.6h-.75V54.2h-.75V54.4h-.75V55.8h-.75V54.2h-.75V54h-.75V53.8h-.75V54.1h-.75V53.6h-.75V53.6h-.75V53.4h-.75V53.8h-.75V54.3h-.75V54.1h-.75V53.7h-.75V54h-.75V53.9h-.75V53.8h-.75V54.2h-.75V54h-.75V54.2h-.75V54.1h-.75V53.8h-.75V54.4h-.75V54.2h-.75V53.7h-.75V54.6h-.75V54.6h-.75V53.8h-.75V53.9h-.75V53.5h-.75V53.4h-.75V53.4h-.75V53.6h-.75V53.6h-.75V53.9h-.75V53.5h-.75V54h-.75V53.5h-.75V53.5h-.75V53.5h-.75V53.8h-.75V53.5h-.75V54h-.75V53.4h-.75V53.4h-.75V53.4h-.75V53.4h-.75V53h-.75V53.5h-.75V53.7h-.75V53.5h-.75V55h-.75V53.8h-.75V54h-.75V54h-.75V53.9h-.75V53.4h-.75V53.2h-.75V52.7h-.75V53.3h-.75V53.6h-.75V53.6h-.75V53.9h-.75V54h-.75V53.6h-.75V54.4h-.75V54.8h-.75V53.5h-.75V54h-.75V53.9h-.75Z"/><path fill="#2d50d2" d="M276.75 43.4V12.7h.75V13.1h.75V12.6h.75V11.3h.75V11.5h.75V11.4h.75V12.3h.75V12.7h.75V12.5h.75V11.3h.75V12.5h.75V12.4h.75V13.1h.75V11.7h.75V11.2h.75V11.1h.75V12.1h.75V12.2h.75V11h.75V10.8h.75V12.4h.75V13.3h.75V11.7h.75V12.5h.75V13.1h.75V13.7h.75V12.3h.75V9.6h.75V11.5h.75V12.3h.75V11.9h.75V11h.75V11.2h.75V12.8h.75V12.8h.75V12.3h.75V12.3h.75V13h.75V12.2h.75V10.9h.75V12.9h.75V9h.75V12.1h.75V13.6h.75V14.1h.75V12.3h.75V14h.75V12.8h.75V12.4h.75V11h.75V12.5h.75V14.6h.75V12.1h.75V13h.75V12.6h.75V11.8h.75V9.5h.75V13.1h.75V13.2h.75V11h.75V11.3h.75V11.9h.75V11.2h.75V11.1h.75V11.5h.75V10.1h.75V9.9h.75V11.4h.75V9.3h.75V11.4h.75V43.4V73.6h-.75V73.6h-.75V73.8h-.75V72.6h-.75V74.5h-.75V74.3h-.75V73.1h-.75V74.8h-.75V72.3h-.75V73.5h-.75V73h-.75V72.5h-.75V73.8h-.75V71.8h-.75V72.2h-.75V73.5h-.75V73.5h-.75V73.6h-.75V75.3h-.75V75.2h-.75V74.4h-.75V73.5h-.75V74.8h-.75V75.3h-.75V74.5h-.75V73.1h-.75V73.9h-.75V74.2h-.75V74.7h-.75V73.6h-.75V74.4h-.75V75h-.75V75.3h-.75V74.4h-.75V75h-.75V74.3h-.75V73.4h-.75V74h-.75V73.6h-.75V74.8h-.75V72.6h-.75V74.7h-.75V73.3h-.75V74.6h-.75V75.1h-.75V74h-.75V75.1h-.75V76.1h-.75V74.3h-.75V74.4h-.75V74.1h-.75V74.5h-.75V73.6h-.75V74.2h-.75V72.8h-.75V73h-.75V74.1h-.75V76.3h-.75V76.5h-.75V74.4h-.75V76h-.75V73.5h-.75V76.8h-.75V74.3h-.75V74.4h-.75V76.3h-.75V79.7h-.75V74.9h-.75V74.5h-.75V73.4h-.75Z"/><path fill="#5070de" d="M276.75 43.4V23.1h.75V23.4h.75V23h.75V22.2h.75V22.3h.75V22.3h.75V22.9h.75V23.1h.75V23h.75V22.2h.75V23h.75V22.9h.75V23.4h.75V22.5h.75V22.2h.75V22.1h.75V22.7h.75V22.8h.75V22h.75V21.9h.75V22.9h.75V23.5h.75V22.5h.75V23h.75V23.4h.75V23.8h.75V22.9h.75V21.1h.75V22.4h.75V22.8h.75V22.6h.75V22h.75V22.1h.75V23.2h.75V23.2h.75V22.9h.75V22.9h.75V23.3h.75V22.8h.75V22h.75V23.3h.75V20.7h.75V22.8h.75V23.7h.75V24.1h.75V22.9h.75V24h.75V23.2h.75V22.9h.75V22h.75V23h.75V24.4h.75V22.7h.75V23.4h.75V23.1h.75V22.6h.75V21h.75V23.4h.75V23.4h.75V22h.75V22.2h.75V22.6h.75V22.1h.75V22.1h.75V22.3h.75V21.4h.75V21.3h.75V22.3h.75V20.9h.75V22.3h.75V43.4V63.3h-.75V63.3h-.75V63.5h-.75V62.7h-.75V63.9h-.75V63.8h-.75V63h-.75V64.1h-.75V62.5h-.75V63.2h-.75V63h-.75V62.6h-.75V63.4h-.75V62.1h-.75V62.4h-.75V63.3h-.75V63.3h-.75V63.3h-.75V64.5h-.75V64.4h-.75V63.9h-.75V63.2h-.75V64.1h-.75V64.4h-.75V63.9h-.75V63h-.75V63.5h-.75V63.7h-.75V64.1h-.75V63.3h-.75V63.9h-.75V64.3h-.75V64.5h-.75V63.9h-.75V64.2h-.75V63.8h-.75V63.2h-.75V63.6h-.75V63.3h-.75V64.1h-.75V62.7h-.75V64h-.75V63.1h-.75V64h-.75V64.3h-.75V63.6h-.75V64.3h-.75V65h-.75V63.8h-.75V63.8h-.75V63.6h-.75V64h-.75V63.3h-.75V63.7h-.75V62.8h-.75V62.9h-.75V63.7h-.75V65.1h-.75V65.3h-.75V63.8h-.75V64.9h-.75V63.3h-.75V65.5h-.75V63.8h-.75V63.9h-.75V65.1h-.75V67.4h-.75V64.2h-.75V63.9h-.75V63.2h-.75Z"/><path fill="#718ee4" d="M276.75 43.4V33.3h.75V33.4h.75V33.2h.75V32.8h.75V32.9h.75V32.8h.75V33.1h.75V33.3h.75V33.2h.75V32.8h.75V33.2h.75V33.2h.75V33.4h.75V32.9h.75V32.8h.75V32.8h.75V33.1h.75V33.1h.75V32.7h.75V32.7h.75V33.2h.75V33.5h.75V32.9h.75V33.2h.75V33.4h.75V33.6h.75V33.1h.75V32.3h.75V32.9h.75V33.1h.75V33h.75V32.7h.75V32.8h.75V33.3h.75V33.3h.75V33.1h.75V33.1h.75V33.4h.75V33.1h.75V32.7h.75V33.3h.75V32h.75V33.1h.75V33.6h.75V33.7h.75V33.1h.75V33.7h.75V33.3h.75V33.2h.75V32.7h.75V33.2h.75V33.9h.75V33.1h.75V33.4h.75V33.2h.75V33h.75V32.2h.75V33.4h.75V33.4h.75V32.7h.75V32.8h.75V33h.75V32.8h.75V32.7h.75V32.9h.75V32.4h.75V32.4h.75V32.8h.75V32.2h.75V32.8h.75V43.4V53.4h-.75V53.4h-.75V53.4h-.75V53h-.75V53.7h-.75V53.6h-.75V53.2h-.75V53.8h-.75V52.9h-.75V53.3h-.75V53.2h-.75V53h-.75V53.4h-.75V52.8h-.75V52.9h-.75V53.3h-.75V53.3h-.75V53.4h-.75V53.9h-.75V53.9h-.75V53.6h-.75V53.3h-.75V53.8h-.75V53.9h-.75V53.7h-.75V53.2h-.75V53.5h-.75V53.6h-.75V53.7h-.75V53.4h-.75V53.6h-.75V53.8h-.75V53.9h-.75V53.6h-.75V53.8h-.75V53.6h-.75V53.3h-.75V53.5h-.75V53.4h-.75V53.8h-.75V53h-.75V53.7h-.75V53.3h-.75V53.7h-.75V53.8h-.75V53.5h-.75V53.8h-.75V54.2h-.75V53.6h-.75V53.6h-.75V53.5h-.75V53.7h-.75V53.4h-.75V53.5h-.75V53.1h-.75V53.2h-.75V53.5h-.75V54.2h-.75V54.3h-.75V53.6h-.75V54.2h-.75V53.3h-.75V54.4h-.75V53.6h-.75V53.6h-.75V54.3h-.75V55.4h-.75V53.8h-.75V53.7h-.75V53.3h-.75Z"/><path fill="#2ac6c8" d="M329.25 43.4V10.8h.75V10.6h.75V10.4h.75V10h.75V11.7h.75V11h.75V11h.75V11.6h.75V10.9h.75V11.3h.75V10.3h.75V11.2h.75V10.8h.75V10h.75V11.6h.75V10.1h.75V10.6h.75V10.6h.75V11.4h.75V10.6h.75V10.8h.75V9.4h.75V10.7h.75V10.1h.75V7.3h.75V9.9h.75V43.4V75.7h-.75V76.1h-.75V76.7h-.75V75.8h-.75V76.9h-.75V76.7h-.75V76h-.75V75.2h-.75V77.1h-.75V75.6h-.75V77.3h-.75V76.4h-.75V76.6h-.75V77.3h-.75V77.1h-.75V75.4h-.75V76.5h-.75V75.5h-.75V80.5h-.75V75.6h-.75V76.2h-.75V75h-.75V78.4h-.75V76.1h-.75V77.2h-.75V76.8h-.75Z"/><path fill="#4ed2d4" d="M329.25 43.4V21.9h.75V21.7h.75V21.6h.75V21.4h.75V22.5h.75V22h.75V22h.75V22.4h.75V22h.75V22.2h.75V21.5h.75V22.1h.75V21.9h.75V21.4h.75V22.4h.75V21.4h.75V21.8h.75V21.8h.75V22.3h.75V21.8h.75V21.9h.75V21h.75V21.8h.75V21.4h.75V19.6h.75V21.3h.75V43.4V64.7h-.75V65h-.75V65.4h-.75V64.8h-.75V65.5h-.75V65.4h-.75V64.9h-.75V64.4h-.75V65.7h-.75V64.7h-.75V65.7h-.75V65.2h-.75V65.3h-.75V65.8h-.75V65.6h-.75V64.5h-.75V65.3h-.75V64.6h-.75V67.9h-.75V64.7h-.75V65h-.75V64.3h-.75V66.5h-.75V65h-.75V65.7h-.75V65.5h-.75Z"/><path fill="#73dcdf" d="M329.25 43.4V32.6h.75V32.6h.75V32.5h.75V32.4h.75V32.9h.75V32.7h.75V32.7h.75V32.9h.75V32.7h.75V32.8h.75V32.5h.75V32.8h.75V32.6h.75V32.4h.75V32.9h.75V32.4h.75V32.6h.75V32.6h.75V32.8h.75V32.6h.75V32.7h.75V32.2h.75V32.6h.75V32.4h.75V31.5h.75V32.3h.75V43.4V54.1h-.75V54.2h-.75V54.4h-.75V54.1h-.75V54.5h-.75V54.4h-.75V54.1h-.75V53.9h-.75V54.5h-.75V54h-.75V54.6h-.75V54.3h-.75V54.3h-.75V54.6h-.75V54.5h-.75V54h-.75V54.3h-.75V54h-.75V55.6h-.75V54h-.75V54.2h-.75V53.8h-.75V54.9h-.75V54.2h-.75V54.5h-.75V54.4h-.75Z"/><path fill="#dcdcdc" d="M348.75 43.4V13.1h.75V12.7h.75V12.2h.75V13.2h.75V14.7h.75V14.4h.75V12.3h.75V13.8h.75V11.9h.75V11.7h.75V13.3h.75V11.3h.75V12.1h.75V11.6h.75V9.9h.75V13.8h.75V12.1h.75V13.9h.75V13.6h.75V14h.75V14.1h.75V14.2h.75V15h.75V14.8h.75V13.6h.75V12.9h.75V15.2h.75V14.6h.75V14.3h.75V12.8h.75V13.8h.75V13.6h.75V14.1h.75V14.4h.75V13.2h.75V12h.75V12.3h.75V13h.75V13.8h.75V13.3h.75V10.2h.75V12h.75V14.5h.75V12.6h.75V13.9h.75V13.2h.75V9.4h.75V13.1h.75V11.4h.75V12.8h.75V12h.75V10.5h.75V12.7h.75V14h.75V12.6h.75V14.6h.75V14h.75V14.5h.75V14.1h.75V12.8h.75V12.8h.75V12.8h.75V14.3h.75V13.5h.75V13.1h.75V12.4h.75V13.6h.75V13.2h.75V14.3h.75V13.6h.75V12h.75V14.3h.75V14.3h.75V16.3h.75V14.7h.75V15.3h.75V13.7h.75V14.4h.75V14.7h.75V13.2h.75V14.7h.75V14.5h.75V13.2h.75V13.6h.75V43.4V76.3h-.75V75.6h-.75V74.6h-.75V73.2h-.75V73.1h-.75V73h-.75V73.1h-.75V74.9h-.75V75.8h-.75V74.9h-.75V78.7h-.75V75.4h-.75V74h-.75V74.3h-.75V73.3h-.75V73.7h-.75V77.4h-.75V74.7h-.75V74.8h-.75V78.3h-.75V74.2h-.75V73.8h-.75V75.8h-.75V76h-.75V73.9h-.75V74h-.75V72.8h-.75V72.7h-.75V74h-.75V73h-.75V74.7h-.75V74.2h-.75V76.5h-.75V74h-.75V74.6h-.75V75.8h-.75V73.9h-.75V73.7h-.75V72.9h-.75V75.3h-.75V73h-.75V72.9h-.75V72.8h-.75V72.8h-.75V74h-.75V72.2h-.75V74.3h-.75V73.1h-.75V77.5h-.75V72.5h-.75V72.9h-.75V75.7h-.75V74.4h-.75V73.6h-.75V74.4h-.75V74.2h-.75V74.2h-.75V73.3h-.75V73.9h-.75V73.2h-.75V73.8h-.75V74.3h-.75V73.9h-.75V74.8h-.75V75.6h-.75V76h-.75V78.8h-.75V75.2h-.75V73.5h-.75V74.7h-.75V73.6h-.75V72.7h-.75V72.6h-.75V73.7h-.75V73.4h-.75V73.4h-.75V73.2h-.75V73.1h-.75V73.3h-.75V72.9h-.75V73.3h-.75V72.7h-.75V74.1h-.75V74.9h-.75Z"/><path fill="#d6a624" d="M411.75 43.4V15.2h.75V15.7h.75V15.5h.75V15.4h.75V14.3h.75V14.7h.75V14h.75V13.2h.75V14.2h.75V13.8h.75V14.8h.75V14.9h.75V12.9h.75V13.7h.75V15.8h.75V14.2h.75V15.7h.75V15.8h.75V14.6h.75V14.8h.75V15h.75V14.9h.75V15.1h.75V15h.75V15.4h.75V15.1h.75V14.8h.75V15.1h.75V11.3h.75V13.3h.75V13.8h.75V13.9h.75V12.8h.75V15.1h.75V14.5h.75V16h.75V14.7h.75V10.3h.75V14.9h.75V12.7h.75V14.8h.75V13.6h.75V14.9h.75V12h.75V14.7h.75V10.3h.75V13.5h.75V12.8h.75V13.5h.75V14.3h.75V15.4h.75V15.8h.75V14.5h.75V15.2h.75V15.2h.75V14.6h.75V14.1h.75V15.9h.75V14.6h.75V14.7h.75V15.7h.75V43.4V75.2h-.75V74.4h-.75V74.2h-.75V73.7h-.75V74.8h-.75V73.4h-.75V72.7h-.75V74.3h-.75V76.2h-.75V72.1h-.75V74.3h-.75V73.5h-.75V78.2h-.75V74.9h-.75V73.7h-.75V74.9h-.75V72.5h-.75V76.7h-.75V74.3h-.75V73.6h-.75V75.1h-.75V73.8h-.75V73.6h-.75V75.1h-.75V73.6h-.75V74.1h-.75V75h-.75V72.9h-.75V72.6h-.75V73.3h-.75V74.5h-.75V73.5h-.75V75.1h-.75V73.6h-.75V76.4h-.75V74.5h-.75V76.6h-.75V73.2h-.75V72.8h-.75V75.8h-.75V72.4h-.75V74.3h-.75V72h-.75V71.9h-.75V71.5h-.75V72.8h-.75V73.4h-.75V72.6h-.75V74.1h-.75V76.2h-.75V73.9h-.75V73.5h-.75V72.9h-.75V72.3h-.75V71.4h-.75V72h-.75V71.6h-.75V71.4h-.75V72.5h-.75V74.7h-.75V73.4h-.75Z"/><path fill="#d6b44f" d="M411.75 43.4V24.8h.75V25.1h.75V25h.75V24.9h.75V24.2h.75V24.5h.75V24h.75V23.5h.75V24.1h.75V23.9h.75V24.5h.75V24.6h.75V23.3h.75V23.8h.75V25.2h.75V24.1h.75V25.1h.75V25.2h.75V24.4h.75V24.5h.75V24.7h.75V24.6h.75V24.7h.75V24.7h.75V24.9h.75V24.7h.75V24.5h.75V24.7h.75V22.2h.75V23.6h.75V23.8h.75V23.9h.75V23.2h.75V24.7h.75V24.3h.75V25.3h.75V24.4h.75V21.5h.75V24.6h.75V23.1h.75V24.5h.75V23.7h.75V24.6h.75V22.6h.75V24.5h.75V21.6h.75V23.7h.75V23.2h.75V23.7h.75V24.2h.75V24.9h.75V25.2h.75V24.3h.75V24.8h.75V24.8h.75V24.4h.75V24.1h.75V25.3h.75V24.4h.75V24.5h.75V25.1h.75V43.4V64.4h-.75V63.9h-.75V63.7h-.75V63.4h-.75V64.1h-.75V63.2h-.75V62.8h-.75V63.8h-.75V65h-.75V62.3h-.75V63.8h-.75V63.3h-.75V66.4h-.75V64.2h-.75V63.4h-.75V64.2h-.75V62.6h-.75V65.4h-.75V63.8h-.75V63.3h-.75V64.3h-.75V63.5h-.75V63.3h-.75V64.3h-.75V63.3h-.75V63.7h-.75V64.3h-.75V62.8h-.75V62.7h-.75V63.1h-.75V63.9h-.75V63.2h-.75V64.3h-.75V63.3h-.75V65.1h-.75V63.9h-.75V65.3h-.75V63.1h-.75V62.8h-.75V64.8h-.75V62.5h-.75V63.8h-.75V62.3h-.75V62.2h-.75V61.9h-.75V62.8h-.75V63.2h-.75V62.7h-.75V63.6h-.75V65h-.75V63.5h-.75V63.3h-.75V62.9h-.75V62.4h-.75V61.9h-.75V62.3h-.75V62h-.75V61.9h-.75V62.6h-.75V64.1h-.75V63.2h-.75Z"/><path fill="#d8bf72" d="M411.75 43.4V34.1h.75V34.2h.75V34.2h.75V34.2h.75V33.8h.75V33.9h.75V33.7h.75V33.4h.75V33.8h.75V33.6h.75V34h.75V34h.75V33.3h.75V33.6h.75V34.3h.75V33.8h.75V34.3h.75V34.3h.75V33.9h.75V33.9h.75V34h.75V34h.75V34.1h.75V34h.75V34.1h.75V34h.75V34h.75V34.1h.75V32.8h.75V33.5h.75V33.6h.75V33.7h.75V33.3h.75V34.1h.75V33.9h.75V34.4h.75V33.9h.75V32.5h.75V34h.75V33.3h.75V33.9h.75V33.6h.75V34h.75V33h.75V33.9h.75V32.5h.75V33.5h.75V33.3h.75V33.5h.75V33.8h.75V34.2h.75V34.3h.75V33.9h.75V34.1h.75V34.1h.75V33.9h.75V33.7h.75V34.3h.75V33.9h.75V33.9h.75V34.3h.75V43.4V53.9h-.75V53.6h-.75V53.6h-.75V53.4h-.75V53.8h-.75V53.3h-.75V53.1h-.75V53.6h-.75V54.2h-.75V52.9h-.75V53.6h-.75V53.3h-.75V54.9h-.75V53.8h-.75V53.4h-.75V53.8h-.75V53h-.75V54.4h-.75V53.6h-.75V53.4h-.75V53.9h-.75V53.4h-.75V53.4h-.75V53.9h-.75V53.4h-.75V53.5h-.75V53.8h-.75V53.1h-.75V53h-.75V53.3h-.75V53.6h-.75V53.3h-.75V53.9h-.75V53.4h-.75V54.3h-.75V53.7h-.75V54.4h-.75V53.2h-.75V53.1h-.75V54.1h-.75V53h-.75V53.6h-.75V52.9h-.75V52.8h-.75V52.7h-.75V53.1h-.75V53.3h-.75V53.1h-.75V53.5h-.75V54.2h-.75V53.5h-.75V53.3h-.75V53.1h-.75V52.9h-.75V52.6h-.75V52.9h-.75V52.7h-.75V52.6h-.75V53h-.75V53.7h-.75V53.3h-.75Z"/><path fill="#74d02a" d="M457.5 43.4V13.8h.75V13.6h.75V9.8h.75V11.8h.75V13h.75V12.8h.75V13.9h.75V13.4h.75V14h.75V13h.75V14.4h.75V14.4h.75V14.3h.75V15h.75V14.6h.75V13.6h.75V12.8h.75V15.1h.75V13.7h.75V14.9h.75V14.3h.75V13.3h.75V12.3h.75V13.6h.75V12.7h.75V12.8h.75V12h.75V13.7h.75V12.4h.75V14.2h.75V13h.75V13.6h.75V13.9h.75V14.6h.75V15.5h.75V14.6h.75V14.5h.75V14.1h.75V15.3h.75V11.2h.75V13h.75V12.9h.75V13.7h.75V13.6h.75V12.8h.75V12.6h.75V14.5h.75V13.5h.75V13.2h.75V13h.75V13.5h.75V12.3h.75V12.8h.75V12.9h.75V14h.75V12.7h.75V14h.75V13.6h.75V14.4h.75V15.2h.75V13h.75V13.5h.75V14.3h.75V13.4h.75V13.9h.75V12h.75V12.9h.75V14.1h.75V13h.75V13.9h.75V15.5h.75V14.4h.75V15.3h.75V13.7h.75V14.4h.75V13.5h.75V15.3h.75V14.9h.75V14.6h.75V13.2h.75V14.8h.75V12.3h.75V14.3h.75V14.2h.75V13.6h.75V13.8h.75V14.2h.75V14.9h.75V13.4h.75V13.1h.75V13.1h.75V12.5h.75V12.9h.75V13.8h.75V14.1h.75V12.7h.75V14.3h.75V12.3h.75V12.2h.75V13.6h.75V14.2h.75V14.5h.75V14h.75V13.3h.75V14.9h.75V13.1h.75V12.7h.75V13.7h.75V13.7h.75V14.7h.75V14.1h.75V13.9h.75V14.3h.75V14.3h.75V14.6h.75V15.3h.75V15.2h.75V15h.75V14.2h.75V14.7h.75V11.7h.75V14.5h.75V13h.75V14.4h.75V12.7h.75V12.6h.75V13.2h.75V12.1h.75V13.4h.75V13h.75V13.3h.75V12.8h.75V13.6h.75V12.7h.75V14h.75V15.1h.75V14.4h.75V12.9h.75V12.2h.75V12.8h.75V11.9h.75V43.4V73.3h-.75V72.8h-.75V73.2h-.75V74.1h-.75V73.2h-.75V72.9h-.75V75.4h-.75V74.3h-.75V75.3h-.75V75.3h-.75V74.2h-.75V74.9h-.75V73.6h-.75V77.2h-.75V75h-.75V75.3h-.75V74h-.75V75.3h-.75V75h-.75V74.2h-.75V72.2h-.75V73h-.75V71.6h-.75V73.7h-.75V72.9h-.75V73.4h-.75V74.9h-.75V74.7h-.75V74.5h-.75V75.4h-.75V75.9h-.75V75.1h-.75V75.3h-.75V74.7h-.75V74.7h-.75V75.2h-.75V74.1h-.75V74.2h-.75V73.7h-.75V73.5h-.75V74.6h-.75V74.8h-.75V76.7h-.75V73.9h-.75V74.5h-.75V74.2h-.75V74.7h-.75V75.5h-.75V74.7h-.75V73.8h-.75V74.5h-.75V75h-.75V73.8h-.75V72.2h-.75V73h-.75V72.6h-.75V74.7h-.75V74.1h-.75V74.9h-.75V75h-.75V76.8h-.75V75.1h-.75V75.8h-.75V74.5h-.75V73.7h-.75V73.8h-.75V73.2h-.75V76.9h-.75V75.5h-.75V73.6h-.75V75.1h-.75V73.6h-.75V74.3h-.75V74.7h-.75V73.9h-.75V72.9h-.75V72.6h-.75V72.4h-.75V71.9h-.75V74.3h-.75V74.1h-.75V74.6h-.75V73.1h-.75V75.2h-.75V74.9h-.75V75.6h-.75V75h-.75V75.5h-.75V74.6h-.75V73.6h-.75V72.9h-.75V73h-.75V71.9h-.75V73.8h-.75V74.8h-.75V71.7h-.75V73.3h-.75V72.9h-.75V74.2h-.75V72.7h-.75V74h-.75V74h-.75V76.5h-.75V73h-.75V75h-.75V73.4h-.75V73.8h-.75V73.2h-.75V74.2h-.75V73.5h-.75V73h-.75V73.7h-.75V73.2h-.75V72.6h-.75V72.4h-.75V73.5h-.75V71.2h-.75V71.6h-.75V73.1h-.75V73.6h-.75V73h-.75V72.8h-.75V75.1h-.75V75.1h-.75V73.8h-.75V78.6h-.75V75.1h-.75V74.8h-.75V75.9h-.75V74.8h-.75V74.2h-.75V74.9h-.75V75.2h-.75V75.7h-.75V75.2h-.75V74.4h-.75V72.7h-.75V73h-.75V75.7h-.75V73.9h-.75V74.6h-.75Z"/><path fill="#8dd94e" d="M457.5 43.4V23.9h.75V23.7h.75V21.2h.75V22.6h.75V23.4h.75V23.2h.75V23.9h.75V23.6h.75V24h.75V23.3h.75V24.3h.75V24.2h.75V24.2h.75V24.6h.75V24.4h.75V23.7h.75V23.2h.75V24.8h.75V23.8h.75V24.6h.75V24.2h.75V23.6h.75V22.9h.75V23.7h.75V23.1h.75V23.2h.75V22.7h.75V23.8h.75V22.9h.75V24.1h.75V23.3h.75V23.7h.75V23.9h.75V24.4h.75V25h.75V24.4h.75V24.3h.75V24.1h.75V24.9h.75V22.1h.75V23.3h.75V23.3h.75V23.8h.75V23.7h.75V23.2h.75V23.1h.75V24.3h.75V23.7h.75V23.5h.75V23.4h.75V23.7h.75V22.9h.75V23.2h.75V23.3h.75V24h.75V23.1h.75V24h.75V23.8h.75V24.3h.75V24.8h.75V23.3h.75V23.7h.75V24.2h.75V23.6h.75V23.9h.75V22.7h.75V23.3h.75V24h.75V23.4h.75V24h.75V25h.75V24.3h.75V24.8h.75V23.8h.75V24.2h.75V23.7h.75V24.9h.75V24.6h.75V24.4h.75V23.5h.75V24.5h.75V22.9h.75V24.2h.75V24.1h.75V23.8h.75V23.9h.75V24.1h.75V24.6h.75V23.6h.75V23.4h.75V23.4h.75V23h.75V23.3h.75V23.9h.75V24.1h.75V23.2h.75V24.2h.75V22.9h.75V22.8h.75V23.7h.75V24.1h.75V24.3h.75V24h.75V23.6h.75V24.6h.75V23.4h.75V23.1h.75V23.8h.75V23.8h.75V24.4h.75V24h.75V23.9h.75V24.2h.75V24.2h.75V24.4h.75V24.9h.75V24.8h.75V24.7h.75V24.1h.75V24.4h.75V22.5h.75V24.4h.75V23.4h.75V24.3h.75V23.1h.75V23.1h.75V23.5h.75V22.8h.75V23.6h.75V23.3h.75V23.5h.75V23.2h.75V23.7h.75V23.1h.75V24h.75V24.7h.75V24.2h.75V23.2h.75V22.8h.75V23.2h.75V22.6h.75V43.4V63.1h-.75V62.8h-.75V63.1h-.75V63.7h-.75V63.1h-.75V62.9h-.75V64.5h-.75V63.8h-.75V64.5h-.75V64.5h-.75V63.8h-.75V64.2h-.75V63.3h-.75V65.7h-.75V64.3h-.75V64.5h-.75V63.6h-.75V64.4h-.75V64.3h-.75V63.7h-.75V62.4h-.75V62.9h-.75V62h-.75V63.4h-.75V62.9h-.75V63.2h-.75V64.2h-.75V64.1h-.75V63.9h-.75V64.5h-.75V64.8h-.75V64.3h-.75V64.4h-.75V64.1h-.75V64.1h-.75V64.4h-.75V63.6h-.75V63.7h-.75V63.4h-.75V63.2h-.75V64h-.75V64.1h-.75V65.4h-.75V63.6h-.75V63.9h-.75V63.7h-.75V64.1h-.75V64.6h-.75V64h-.75V63.4h-.75V63.9h-.75V64.3h-.75V63.5h-.75V62.4h-.75V62.9h-.75V62.7h-.75V64h-.75V63.7h-.75V64.2h-.75V64.2h-.75V65.4h-.75V64.3h-.75V64.8h-.75V63.9h-.75V63.4h-.75V63.4h-.75V63h-.75V65.5h-.75V64.6h-.75V63.3h-.75V64.3h-.75V63.3h-.75V63.8h-.75V64h-.75V63.5h-.75V62.9h-.75V62.7h-.75V62.6h-.75V62.2h-.75V63.8h-.75V63.6h-.75V64h-.75V63h-.75V64.4h-.75V64.2h-.75V64.7h-.75V64.2h-.75V64.6h-.75V64h-.75V63.3h-.75V62.9h-.75V62.9h-.75V62.2h-.75V63.5h-.75V64.1h-.75V62.1h-.75V63.1h-.75V62.9h-.75V63.7h-.75V62.7h-.75V63.6h-.75V63.6h-.75V65.2h-.75V62.9h-.75V64.2h-.75V63.2h-.75V63.4h-.75V63.1h-.75V63.7h-.75V63.3h-.75V62.9h-.75V63.4h-.75V63.1h-.75V62.7h-.75V62.5h-.75V63.2h-.75V61.7h-.75V62h-.75V63h-.75V63.3h-.75V62.9h-.75V62.8h-.75V64.3h-.75V64.3h-.75V63.5h-.75V66.6h-.75V64.3h-.75V64.1h-.75V64.9h-.75V64.2h-.75V63.7h-.75V64.2h-.75V64.4h-.75V64.7h-.75V64.4h-.75V63.9h-.75V62.7h-.75V62.9h-.75V64.7h-.75V63.5h-.75V64h-.75Z"/><path fill="#a5e072" d="M457.5 43.4V33.6h.75V33.6h.75V32.3h.75V33h.75V33.4h.75V33.3h.75V33.7h.75V33.5h.75V33.7h.75V33.4h.75V33.8h.75V33.8h.75V33.8h.75V34h.75V33.9h.75V33.6h.75V33.3h.75V34.1h.75V33.6h.75V34h.75V33.8h.75V33.5h.75V33.2h.75V33.6h.75V33.3h.75V33.3h.75V33h.75V33.6h.75V33.2h.75V33.8h.75V33.4h.75V33.6h.75V33.7h.75V33.9h.75V34.2h.75V33.9h.75V33.9h.75V33.7h.75V34.1h.75V32.8h.75V33.4h.75V33.3h.75V33.6h.75V33.6h.75V33.3h.75V33.2h.75V33.9h.75V33.5h.75V33.4h.75V33.4h.75V33.5h.75V33.1h.75V33.3h.75V33.3h.75V33.7h.75V33.3h.75V33.7h.75V33.6h.75V33.8h.75V34.1h.75V33.4h.75V33.5h.75V33.8h.75V33.5h.75V33.7h.75V33h.75V33.3h.75V33.7h.75V33.4h.75V33.7h.75V34.2h.75V33.8h.75V34.1h.75V33.6h.75V33.8h.75V33.5h.75V34.1h.75V34h.75V33.9h.75V33.4h.75V34h.75V33.1h.75V33.8h.75V33.8h.75V33.6h.75V33.6h.75V33.8h.75V34h.75V33.5h.75V33.4h.75V33.4h.75V33.2h.75V33.3h.75V33.6h.75V33.7h.75V33.3h.75V33.8h.75V33.1h.75V33.1h.75V33.6h.75V33.8h.75V33.9h.75V33.7h.75V33.5h.75V34h.75V33.4h.75V33.3h.75V33.6h.75V33.6h.75V33.9h.75V33.7h.75V33.7h.75V33.8h.75V33.8h.75V33.9h.75V34.1h.75V34.1h.75V34h.75V33.8h.75V33.9h.75V32.9h.75V33.9h.75V33.4h.75V33.8h.75V33.3h.75V33.2h.75V33.4h.75V33.1h.75V33.5h.75V33.4h.75V33.5h.75V33.3h.75V33.6h.75V33.3h.75V33.7h.75V34.1h.75V33.8h.75V33.3h.75V33.1h.75V33.3h.75V33h.75V43.4V53.3h-.75V53.1h-.75V53.2h-.75V53.5h-.75V53.2h-.75V53.1h-.75V54h-.75V53.6h-.75V53.9h-.75V53.9h-.75V53.6h-.75V53.8h-.75V53.4h-.75V54.6h-.75V53.8h-.75V53.9h-.75V53.5h-.75V53.9h-.75V53.8h-.75V53.5h-.75V52.9h-.75V53.2h-.75V52.7h-.75V53.4h-.75V53.1h-.75V53.3h-.75V53.8h-.75V53.7h-.75V53.7h-.75V54h-.75V54.1h-.75V53.9h-.75V53.9h-.75V53.7h-.75V53.7h-.75V53.9h-.75V53.5h-.75V53.6h-.75V53.4h-.75V53.3h-.75V53.7h-.75V53.8h-.75V54.4h-.75V53.5h-.75V53.7h-.75V53.6h-.75V53.7h-.75V54h-.75V53.7h-.75V53.4h-.75V53.7h-.75V53.8h-.75V53.4h-.75V52.9h-.75V53.2h-.75V53h-.75V53.7h-.75V53.5h-.75V53.8h-.75V53.8h-.75V54.4h-.75V53.9h-.75V54.1h-.75V53.7h-.75V53.4h-.75V53.4h-.75V53.2h-.75V54.5h-.75V54h-.75V53.4h-.75V53.9h-.75V53.4h-.75V53.6h-.75V53.7h-.75V53.5h-.75V53.1h-.75V53h-.75V53h-.75V52.8h-.75V53.6h-.75V53.5h-.75V53.7h-.75V53.2h-.75V53.9h-.75V53.8h-.75V54h-.75V53.8h-.75V54h-.75V53.7h-.75V53.4h-.75V53.1h-.75V53.2h-.75V52.8h-.75V53.4h-.75V53.8h-.75V52.7h-.75V53.3h-.75V53.1h-.75V53.5h-.75V53.1h-.75V53.5h-.75V53.5h-.75V54.3h-.75V53.2h-.75V53.8h-.75V53.3h-.75V53.4h-.75V53.2h-.75V53.5h-.75V53.3h-.75V53.2h-.75V53.4h-.75V53.2h-.75V53h-.75V53h-.75V53.3h-.75V52.6h-.75V52.7h-.75V53.2h-.75V53.4h-.75V53.2h-.75V53.1h-.75V53.9h-.75V53.9h-.75V53.4h-.75V55h-.75V53.9h-.75V53.8h-.75V54.1h-.75V53.8h-.75V53.6h-.75V53.8h-.75V53.9h-.75V54.1h-.75V53.9h-.75V53.6h-.75V53.1h-.75V53.2h-.75V54.1h-.75V53.5h-.75V53.7h-.75Z"/><path fill="#dcdcdc" d="M563.25 43.4V14.5h.75V14.6h.75V14.7h.75V14.5h.75V13.6h.75V11h.75V14.5h.75V15.5h.75V13.4h.75V13.7h.75V15.2h.75V13.6h.75V14.7h.75V15.7h.75V14h.75V15.1h.75V13.5h.75V13.8h.75V14.6h.75V14.9h.75V15.2h.75V15.6h.75V15.5h.75V15.4h.75V15.7h.75V15.5h.75V15.8h.75V14.8h.75V15.6h.75V16.6h.75V15.5h.75V16.1h.75V14.8h.75V15.3h.75V13.9h.75V15.8h.75V15.5h.75V14h.75V15.7h.75V16.6h.75V15.9h.75V15.6h.75V16.2h.75V15.5h.75V16.3h.75V13.9h.75V13.9h.75V16.6h.75V16.8h.75V17.2h.75V14.2h.75V14.1h.75V13.5h.75V14.6h.75V14.6h.75V14.1h.75V15.4h.75V14.1h.75V15.4h.75V15.7h.75V15.8h.75V13.9h.75V15.6h.75V13.2h.75V15h.75V13h.75V14.7h.75V13.7h.75V11.8h.75V14.6h.75V16.2h.75V16.8h.75V14.6h.75V15.6h.75V16h.75V14.8h.75V13.3h.75V14.8h.75V13.5h.75V43.4V71.2h-.75V73h-.75V73.8h-.75V71.9h-.75V76.5h-.75V73.7h-.75V73.2h-.75V73.6h-.75V72.9h-.75V74h-.75V73.8h-.75V72.4h-.75V72.9h-.75V71.3h-.75V72.8h-.75V73.5h-.75V73.1h-.75V74.6h-.75V72.8h-.75V73.9h-.75V73.8h-.75V75.4h-.75V72.6h-.75V72.2h-.75V77.1h-.75V71.6h-.75V73.1h-.75V71.9h-.75V72.3h-.75V71.6h-.75V72.9h-.75V72.1h-.75V73.9h-.75V73.1h-.75V73h-.75V73.9h-.75V72.1h-.75V72.1h-.75V72.3h-.75V73.4h-.75V72.8h-.75V73.5h-.75V74.1h-.75V73.4h-.75V72.8h-.75V74.4h-.75V72.7h-.75V73.4h-.75V72.6h-.75V72h-.75V75.8h-.75V73.7h-.75V75.3h-.75V73.9h-.75V72.7h-.75V74.1h-.75V74h-.75V74.2h-.75V74.8h-.75V74.3h-.75V75h-.75V74.1h-.75V74h-.75V75.6h-.75V73.1h-.75V73.2h-.75V74.2h-.75V72.7h-.75V72.7h-.75V72.9h-.75V73.4h-.75V73.4h-.75V74.1h-.75V74.1h-.75V76.3h-.75V73.4h-.75V73.7h-.75V72.7h-.75V71.9h-.75Z"/><rect x="114.55" y="10.4" width=".6" height="66.0" fill="#fff" fill-opacity=".5"/><rect x="216.35" y="10.4" width=".6" height="66.0" fill="#fff" fill-opacity=".5"/><rect x="348.55" y="10.4" width=".6" height="66.0" fill="#fff" fill-opacity=".5"/><rect x="0" y="0" width="562.4" height="89" fill="#000" fill-opacity=".3"/><rect x="563.7" y="0" width="61" height="89" fill="#000" fill-opacity=".3"/></svg>
<div class="sep"></div>
<div class="mainbg"></div>
<svg width="624" height="120" viewBox="0 0 624 120" style="left:0;top:130px"><path fill="#74d02a" d="M0 59.6V33h.75V37.4h.75V38.6h.75V36.8h.75V31.1h.75V37.6h.75V34h.75V39.2h.75V38.1h.75V28.7h.75V34.8h.75V28.4h.75V27.7h.75V36.8h.75V26.3h.75V26.4h.75V26.9h.75V30.8h.75V26.1h.75V36.3h.75V29.8h.75V33.7h.75V38.8h.75V40.9h.75V43.9h.75V48h.75V46.8h.75V46.8h.75V49.6h.75V50.1h.75V48.6h.75V47.7h.75V50.4h.75V48.7h.75V49.9h.75V48.7h.75V43.1h.75V41.1h.75V40.2h.75V33.7h.75V42.9h.75V39.5h.75V40h.75V40.9h.75V41.6h.75V40.2h.75V37.7h.75V36.7h.75V40h.75V26.8h.75V35.4h.75V28.8h.75V30.1h.75V35.9h.75V35.7h.75V29.7h.75V27.6h.75V34.4h.75V32.7h.75V30.6h.75V27.6h.75V33.5h.75V27.4h.75V35.7h.75V35h.75V41.7h.75V47.7h.75V47.8h.75V47.8h.75V46h.75V46.8h.75V47h.75V45.9h.75V41.8h.75V43.8h.75V42.7h.75V38.8h.75V40h.75V42.6h.75V42.2h.75V41.9h.75V38.9h.75V28.3h.75V33.3h.75V34.6h.75V35.1h.75V35.6h.75V35.5h.75V34.1h.75V32h.75V34h.75V33.7h.75V30.8h.75V33.4h.75V34.9h.75V29.6h.75V32.5h.75V33.3h.75V33h.75V25.6h.75V26.4h.75V34.3h.75V27.2h.75V27.6h.75V33.9h.75V34.5h.75V35.5h.75V47.4h.75V50.3h.75V50h.75V47.3h.75V49.1h.75V46.9h.75V49h.75V39.1h.75V35.4h.75V39.2h.75V32.1h.75V32.8h.75V36.1h.75V38.9h.75V36.8h.75V32.7h.75V36.9h.75V32.7h.75V33.9h.75V36.8h.75V31.3h.75V36h.75V38.5h.75V38.9h.75V31.1h.75V33.2h.75V30.5h.75V37.1h.75V32.5h.75V35.1h.75V35.4h.75V35.3h.75V34.8h.75V35.8h.75V27.5h.75V27.2h.75V26.6h.75V28.1h.75V36.3h.75V30.2h.75V49.6h.75V47.8h.75V48.3h.75V50.5h.75V48.9h.75V46.2h.75V49.4h.75V49.9h.75V47.6h.75V48.5h.75V43.1h.75V44.2h.75V48h.75V48.5h.75V28.4h.75V45.3h.75V45.9h.75V48.7h.75V49.2h.75V49.6h.75V45.8h.75V44h.75V40.2h.75V38.6h.75V43.3h.75V37.1h.75V37.8h.75V38.5h.75V35.8h.75V41h.75V38.6h.75V42h.75V35h.75V40.7h.75V37h.75V25.4h.75V39.7h.75V40.6h.75V35.8h.75V36.3h.75V36.8h.75V38.4h.75V43.6h.75V46.4h.75V42.6h.75V45.2h.75V46h.75V46h.75V41.3h.75V46h.75V47.1h.75V42h.75V45.4h.75V44.9h.75V41.9h.75V31.2h.75V36h.75V44.1h.75V43.8h.75V43h.75V43.2h.75V43.8h.75V46h.75V41.1h.75V44.1h.75V39.9h.75V40.3h.75V37.4h.75V35.6h.75V36.3h.75V39.6h.75V41.5h.75V35h.75V37h.75V41h.75V37.5h.75V34.9h.75V37.2h.75V33.2h.75V34.2h.75V40.3h.75V31.9h.75V32.9h.75V39.5h.75V48.7h.75V47.7h.75V45.5h.75V59.6V74.3h-.75V70.9h-.75V76.2h-.75V88.1h-.75V91.2h-.75V86.9h-.75V87.2h-.75V80.1h-.75V85.3h-.75V85.7h-.75V81.2h-.75V86.7h-.75V79.6h-.75V78.5h-.75V84.4h-.75V80h-.75V80.2h-.75V78.3h-.75V82h-.75V77.4h-.75V82.9h-.75V76h-.75V75.4h-.75V77.4h-.75V76h-.75V76h-.75V75.2h-.75V78.7h-.75V75.6h-.75V78.5h-.75V79.7h-.75V76.7h-.75V75.2h-.75V75.6h-.75V78.1h-.75V73.3h-.75V75.1h-.75V74.4h-.75V74.2h-.75V75.5h-.75V77.6h-.75V78.6h-.75V73.1h-.75V76.2h-.75V76.1h-.75V79.4h-.75V79.7h-.75V80.4h-.75V81h-.75V80.6h-.75V88.3h-.75V81.4h-.75V86.4h-.75V86.3h-.75V84.6h-.75V83.1h-.75V79.4h-.75V80.7h-.75V84.3h-.75V82.4h-.75V77.2h-.75V77.6h-.75V83.7h-.75V77.7h-.75V77.1h-.75V76.5h-.75V70.2h-.75V72.8h-.75V69.8h-.75V70.6h-.75V77.3h-.75V81.2h-.75V74.4h-.75V72.9h-.75V74.3h-.75V74.4h-.75V76h-.75V71.3h-.75V74.3h-.75V72h-.75V72.9h-.75V71.5h-.75V70.3h-.75V69.4h-.75V73.2h-.75V73.9h-.75V72.5h-.75V82.5h-.75V87.4h-.75V89.1h-.75V87.1h-.75V92.1h-.75V83.6h-.75V89.4h-.75V89.2h-.75V90.7h-.75V84.2h-.75V82.9h-.75V83.5h-.75V84.2h-.75V84.1h-.75V89.2h-.75V81.9h-.75V90.9h-.75V89.8h-.75V83.4h-.75V83.8h-.75V91.1h-.75V83.7h-.75V84.2h-.75V84.2h-.75V85.9h-.75V84.4h-.75V84.9h-.75V82.3h-.75V86.6h-.75V89.1h-.75V89.4h-.75V83.1h-.75V83.9h-.75V73.6h-.75V71.8h-.75V72.8h-.75V73.1h-.75V69.4h-.75V70h-.75V72.7h-.75V71.9h-.75V86.2h-.75V93.5h-.75V86.5h-.75V94.8h-.75V85h-.75V104.1h-.75V88.5h-.75V86.6h-.75V89.8h-.75V87.8h-.75V86.9h-.75V94.2h-.75V88.2h-.75V87.3h-.75V90.3h-.75V87.5h-.75V85.4h-.75V91h-.75V83.7h-.75V84.3h-.75V86.1h-.75V83.8h-.75V87.3h-.75V87.4h-.75V80.5h-.75V80.4h-.75V84.3h-.75V79.5h-.75V83.2h-.75V79h-.75V76h-.75V80.2h-.75V80.5h-.75V74.3h-.75V75.8h-.75V73.1h-.75V75.2h-.75V70.5h-.75V72.9h-.75V74.5h-.75V71.4h-.75V85.8h-.75V91.3h-.75V87.5h-.75V84.8h-.75V96.6h-.75V83.8h-.75V88.7h-.75V84h-.75V87.1h-.75V87.6h-.75V85h-.75V92.4h-.75V91.3h-.75V86.3h-.75V93h-.75V87h-.75V94.5h-.75V80.5h-.75V81h-.75V81.4h-.75V82.8h-.75V77.9h-.75V76.9h-.75V80.6h-.75V82.3h-.75V81.2h-.75V77.1h-.75V77.7h-.75V72.8h-.75V73.3h-.75V70.9h-.75V73.4h-.75V69.9h-.75V71.2h-.75V69.5h-.75V72.6h-.75V69.6h-.75V70.1h-.75V70.5h-.75V78.5h-.75V74h-.75V81.3h-.75V82.4h-.75V90.2h-.75V91.8h-.75V86.7h-.75V87.1h-.75V92.4h-.75V99.6h-.75V89.2h-.75V85h-.75V92.3h-.75V90h-.75V93.1h-.75V91.2h-.75V91.3h-.75V83.1h-.75V82.9h-.75V88.3h-.75V86.8h-.75V84.8h-.75V90.6h-.75V81h-.75V86.1h-.75V83.8h-.75Z"/><path fill="#8dd94e" d="M0 59.6V42h.75V44.9h.75V45.7h.75V44.6h.75V40.8h.75V45.1h.75V42.7h.75V46.2h.75V45.4h.75V39.2h.75V43.3h.75V39h.75V38.5h.75V44.6h.75V37.6h.75V37.7h.75V38h.75V40.6h.75V37.5h.75V44.2h.75V39.9h.75V42.5h.75V45.9h.75V47.3h.75V49.3h.75V51.9h.75V51.1h.75V51.1h.75V53h.75V53.3h.75V52.3h.75V51.8h.75V53.5h.75V52.4h.75V53.2h.75V52.4h.75V48.7h.75V47.4h.75V46.8h.75V42.5h.75V48.6h.75V46.4h.75V46.7h.75V47.3h.75V47.7h.75V46.8h.75V45.2h.75V44.5h.75V46.6h.75V38h.75V43.6h.75V39.3h.75V40.2h.75V44h.75V43.8h.75V39.8h.75V38.5h.75V43h.75V41.8h.75V40.5h.75V38.5h.75V42.4h.75V38.3h.75V43.8h.75V43.4h.75V47.8h.75V51.7h.75V51.8h.75V51.8h.75V50.7h.75V51.2h.75V51.3h.75V50.6h.75V47.8h.75V49.2h.75V48.5h.75V45.9h.75V46.7h.75V48.4h.75V48.1h.75V47.9h.75V46h.75V39h.75V42.2h.75V43.1h.75V43.5h.75V43.8h.75V43.7h.75V42.8h.75V41.4h.75V42.7h.75V42.5h.75V40.6h.75V42.3h.75V43.3h.75V39.8h.75V41.7h.75V42.2h.75V42h.75V37.2h.75V37.7h.75V42.9h.75V38.2h.75V38.5h.75V42.6h.75V43.1h.75V43.7h.75V51.6h.75V53.5h.75V53.3h.75V51.5h.75V52.7h.75V51.2h.75V52.6h.75V46.1h.75V43.7h.75V46.2h.75V41.5h.75V41.9h.75V44.1h.75V45.9h.75V44.6h.75V41.9h.75V44.6h.75V41.8h.75V42.6h.75V44.5h.75V40.9h.75V44h.75V45.7h.75V45.9h.75V40.8h.75V42.2h.75V40.4h.75V44.8h.75V41.7h.75V43.4h.75V43.6h.75V43.6h.75V43.2h.75V43.9h.75V38.4h.75V38.2h.75V37.8h.75V38.8h.75V44.2h.75V40.2h.75V53h.75V51.8h.75V52.2h.75V53.6h.75V52.5h.75V50.8h.75V52.9h.75V53.2h.75V51.7h.75V52.3h.75V48.7h.75V49.5h.75V52h.75V52.3h.75V39h.75V50.1h.75V50.6h.75V52.4h.75V52.7h.75V53h.75V50.5h.75V49.3h.75V46.8h.75V45.7h.75V48.9h.75V44.7h.75V45.2h.75V45.7h.75V43.9h.75V47.4h.75V45.7h.75V48h.75V43.4h.75V47.1h.75V44.7h.75V37h.75V46.5h.75V47.1h.75V43.9h.75V44.2h.75V44.5h.75V45.6h.75V49h.75V50.9h.75V48.4h.75V50.1h.75V50.6h.75V50.6h.75V47.5h.75V50.6h.75V51.3h.75V48h.75V50.2h.75V49.9h.75V47.9h.75V40.8h.75V44h.75V49.4h.75V49.2h.75V48.6h.75V48.8h.75V49.2h.75V50.6h.75V47.4h.75V49.4h.75V46.6h.75V46.8h.75V44.9h.75V43.8h.75V44.2h.75V46.4h.75V47.7h.75V43.4h.75V44.7h.75V47.3h.75V45h.75V43.3h.75V44.8h.75V42.2h.75V42.9h.75V46.9h.75V41.3h.75V42h.75V46.3h.75V52.4h.75V51.7h.75V50.3h.75V59.6V69.3h-.75V67h-.75V70.6h-.75V78.4h-.75V80.5h-.75V77.6h-.75V77.8h-.75V73.1h-.75V76.6h-.75V76.8h-.75V73.8h-.75V77.5h-.75V72.8h-.75V72.1h-.75V76h-.75V73.1h-.75V73.2h-.75V71.9h-.75V74.4h-.75V71.3h-.75V75h-.75V70.4h-.75V70h-.75V71.4h-.75V70.4h-.75V70.4h-.75V69.9h-.75V72.2h-.75V70.1h-.75V72.1h-.75V72.9h-.75V70.9h-.75V69.9h-.75V70.2h-.75V71.8h-.75V68.6h-.75V69.9h-.75V69.4h-.75V69.3h-.75V70.1h-.75V71.5h-.75V72.1h-.75V68.5h-.75V70.5h-.75V70.5h-.75V72.7h-.75V72.9h-.75V73.3h-.75V73.7h-.75V73.5h-.75V78.6h-.75V74h-.75V77.3h-.75V77.2h-.75V76.1h-.75V75.1h-.75V72.7h-.75V73.5h-.75V75.9h-.75V74.7h-.75V71.2h-.75V71.5h-.75V75.5h-.75V71.5h-.75V71.2h-.75V70.8h-.75V66.6h-.75V68.3h-.75V66.3h-.75V66.9h-.75V71.3h-.75V73.9h-.75V69.4h-.75V68.4h-.75V69.3h-.75V69.3h-.75V70.4h-.75V67.3h-.75V69.3h-.75V67.8h-.75V68.4h-.75V67.5h-.75V66.7h-.75V66.1h-.75V68.6h-.75V69h-.75V68.1h-.75V74.7h-.75V78h-.75V79.1h-.75V77.7h-.75V81h-.75V75.4h-.75V79.3h-.75V79.1h-.75V80.2h-.75V75.8h-.75V75h-.75V75.4h-.75V75.8h-.75V75.7h-.75V79.1h-.75V74.3h-.75V80.2h-.75V79.5h-.75V75.3h-.75V75.6h-.75V80.4h-.75V75.5h-.75V75.8h-.75V75.9h-.75V77h-.75V76h-.75V76.3h-.75V74.6h-.75V77.4h-.75V79.1h-.75V79.3h-.75V75.1h-.75V75.7h-.75V68.8h-.75V67.6h-.75V68.3h-.75V68.5h-.75V66.1h-.75V66.5h-.75V68.3h-.75V67.7h-.75V77.2h-.75V82h-.75V77.3h-.75V82.8h-.75V76.4h-.75V89h-.75V78.6h-.75V77.4h-.75V79.5h-.75V78.2h-.75V77.6h-.75V82.4h-.75V78.5h-.75V77.9h-.75V79.8h-.75V78h-.75V76.6h-.75V80.3h-.75V75.5h-.75V75.9h-.75V77.1h-.75V75.6h-.75V77.9h-.75V77.9h-.75V73.4h-.75V73.3h-.75V75.9h-.75V72.8h-.75V75.2h-.75V72.4h-.75V70.4h-.75V73.2h-.75V73.4h-.75V69.3h-.75V70.3h-.75V68.5h-.75V69.9h-.75V66.8h-.75V68.4h-.75V69.4h-.75V67.4h-.75V76.9h-.75V80.5h-.75V78h-.75V76.2h-.75V84h-.75V75.6h-.75V78.8h-.75V75.7h-.75V77.7h-.75V78.1h-.75V76.4h-.75V81.3h-.75V80.5h-.75V77.2h-.75V81.7h-.75V77.7h-.75V82.7h-.75V73.4h-.75V73.8h-.75V74h-.75V74.9h-.75V71.7h-.75V71h-.75V73.5h-.75V74.6h-.75V73.9h-.75V71.2h-.75V71.5h-.75V68.3h-.75V68.6h-.75V67.1h-.75V68.7h-.75V66.4h-.75V67.3h-.75V66.1h-.75V68.2h-.75V66.2h-.75V66.5h-.75V66.8h-.75V72.1h-.75V69.1h-.75V73.9h-.75V74.6h-.75V79.8h-.75V80.9h-.75V77.5h-.75V77.8h-.75V81.2h-.75V86h-.75V79.1h-.75V76.4h-.75V81.2h-.75V79.7h-.75V81.7h-.75V80.5h-.75V80.5h-.75V75.1h-.75V75h-.75V78.6h-.75V77.6h-.75V76.2h-.75V80.1h-.75V73.7h-.75V77.1h-.75V75.6h-.75Z"/><path fill="#a5e072" d="M0 59.6V50.8h.75V52.3h.75V52.7h.75V52.1h.75V50.2h.75V52.3h.75V51.2h.75V52.9h.75V52.5h.75V49.4h.75V51.4h.75V49.3h.75V49.1h.75V52.1h.75V48.6h.75V48.6h.75V48.8h.75V50.1h.75V48.5h.75V51.9h.75V49.8h.75V51.1h.75V52.8h.75V53.4h.75V54.4h.75V55.8h.75V55.4h.75V55.4h.75V56.3h.75V56.5h.75V56h.75V55.7h.75V56.6h.75V56h.75V56.4h.75V56h.75V54.2h.75V53.5h.75V53.2h.75V51.1h.75V54.1h.75V53h.75V53.1h.75V53.4h.75V53.7h.75V53.2h.75V52.4h.75V52h.75V53.1h.75V48.8h.75V51.6h.75V49.4h.75V49.9h.75V51.8h.75V51.7h.75V49.7h.75V49h.75V51.3h.75V50.7h.75V50h.75V49h.75V51h.75V49h.75V51.7h.75V51.5h.75V53.7h.75V55.7h.75V55.7h.75V55.7h.75V55.1h.75V55.4h.75V55.4h.75V55.1h.75V53.7h.75V54.4h.75V54h.75V52.7h.75V53.1h.75V54h.75V53.9h.75V53.8h.75V52.8h.75V49.3h.75V50.9h.75V51.3h.75V51.5h.75V51.7h.75V51.6h.75V51.2h.75V50.5h.75V51.2h.75V51.1h.75V50.1h.75V51h.75V51.4h.75V49.7h.75V50.7h.75V50.9h.75V50.8h.75V48.4h.75V48.6h.75V51.3h.75V48.9h.75V49h.75V51.1h.75V51.3h.75V51.7h.75V55.6h.75V56.5h.75V56.4h.75V55.5h.75V56.1h.75V55.4h.75V56.1h.75V52.8h.75V51.6h.75V52.9h.75V50.5h.75V50.8h.75V51.8h.75V52.8h.75V52.1h.75V50.7h.75V52.1h.75V50.7h.75V51.1h.75V52.1h.75V50.3h.75V51.8h.75V52.6h.75V52.8h.75V50.2h.75V50.9h.75V50h.75V52.2h.75V50.7h.75V51.5h.75V51.6h.75V51.6h.75V51.4h.75V51.7h.75V49h.75V48.9h.75V48.7h.75V49.2h.75V51.9h.75V49.9h.75V56.3h.75V55.7h.75V55.9h.75V56.6h.75V56.1h.75V55.2h.75V56.2h.75V56.4h.75V55.6h.75V55.9h.75V54.2h.75V54.5h.75V55.8h.75V55.9h.75V49.3h.75V54.9h.75V55.1h.75V56h.75V56.2h.75V56.3h.75V55h.75V54.5h.75V53.2h.75V52.7h.75V54.2h.75V52.2h.75V52.4h.75V52.6h.75V51.7h.75V53.5h.75V52.7h.75V53.8h.75V51.5h.75V53.4h.75V52.1h.75V48.3h.75V53h.75V53.3h.75V51.7h.75V51.9h.75V52.1h.75V52.6h.75V54.3h.75V55.3h.75V54h.75V54.9h.75V55.1h.75V55.1h.75V53.6h.75V55.1h.75V55.5h.75V53.8h.75V54.9h.75V54.8h.75V53.8h.75V50.2h.75V51.8h.75V54.5h.75V54.4h.75V54.1h.75V54.2h.75V54.4h.75V55.1h.75V53.5h.75V54.5h.75V53.1h.75V53.2h.75V52.3h.75V51.7h.75V51.9h.75V53h.75V53.6h.75V51.5h.75V52.1h.75V53.5h.75V52.3h.75V51.5h.75V52.2h.75V50.9h.75V51.2h.75V53.2h.75V50.5h.75V50.8h.75V53h.75V56h.75V55.7h.75V54.9h.75V59.6V64.5h-.75V63.3h-.75V65.1h-.75V69h-.75V70h-.75V68.6h-.75V68.7h-.75V66.4h-.75V68.1h-.75V68.2h-.75V66.7h-.75V68.5h-.75V66.2h-.75V65.8h-.75V67.8h-.75V66.3h-.75V66.4h-.75V65.8h-.75V67h-.75V65.5h-.75V67.3h-.75V65h-.75V64.8h-.75V65.5h-.75V65h-.75V65h-.75V64.7h-.75V65.9h-.75V64.9h-.75V65.8h-.75V66.2h-.75V65.2h-.75V64.7h-.75V64.9h-.75V65.7h-.75V64.1h-.75V64.7h-.75V64.5h-.75V64.4h-.75V64.9h-.75V65.6h-.75V65.9h-.75V64h-.75V65.1h-.75V65h-.75V66.1h-.75V66.2h-.75V66.5h-.75V66.7h-.75V66.5h-.75V69.1h-.75V66.8h-.75V68.5h-.75V68.4h-.75V67.8h-.75V67.3h-.75V66.1h-.75V66.6h-.75V67.8h-.75V67.1h-.75V65.4h-.75V65.5h-.75V67.6h-.75V65.6h-.75V65.4h-.75V65.2h-.75V63.1h-.75V64h-.75V63h-.75V63.2h-.75V65.4h-.75V66.7h-.75V64.5h-.75V64h-.75V64.5h-.75V64.5h-.75V65h-.75V63.5h-.75V64.5h-.75V63.7h-.75V64h-.75V63.5h-.75V63.1h-.75V62.8h-.75V64.1h-.75V64.3h-.75V63.9h-.75V67.1h-.75V68.8h-.75V69.3h-.75V68.7h-.75V70.3h-.75V67.5h-.75V69.4h-.75V69.4h-.75V69.9h-.75V67.7h-.75V67.3h-.75V67.5h-.75V67.7h-.75V67.7h-.75V69.4h-.75V67h-.75V69.9h-.75V69.6h-.75V67.5h-.75V67.6h-.75V70h-.75V67.6h-.75V67.7h-.75V67.7h-.75V68.3h-.75V67.8h-.75V68h-.75V67.1h-.75V68.5h-.75V69.3h-.75V69.4h-.75V67.4h-.75V67.6h-.75V64.2h-.75V63.6h-.75V64h-.75V64.1h-.75V62.8h-.75V63h-.75V63.9h-.75V63.7h-.75V68.4h-.75V70.8h-.75V68.5h-.75V71.2h-.75V68h-.75V74.3h-.75V69.1h-.75V68.5h-.75V69.6h-.75V68.9h-.75V68.6h-.75V71h-.75V69h-.75V68.7h-.75V69.7h-.75V68.8h-.75V68.1h-.75V70h-.75V67.5h-.75V67.7h-.75V68.4h-.75V67.6h-.75V68.7h-.75V68.8h-.75V66.5h-.75V66.5h-.75V67.8h-.75V66.2h-.75V67.4h-.75V66h-.75V65h-.75V66.4h-.75V66.5h-.75V64.4h-.75V65h-.75V64.1h-.75V64.7h-.75V63.2h-.75V64h-.75V64.5h-.75V63.5h-.75V68.2h-.75V70.1h-.75V68.8h-.75V67.9h-.75V71.8h-.75V67.6h-.75V69.2h-.75V67.6h-.75V68.7h-.75V68.9h-.75V68h-.75V70.4h-.75V70h-.75V68.4h-.75V70.6h-.75V68.6h-.75V71.1h-.75V66.5h-.75V66.7h-.75V66.8h-.75V67.2h-.75V65.6h-.75V65.3h-.75V66.5h-.75V67.1h-.75V66.7h-.75V65.4h-.75V65.6h-.75V64h-.75V64.1h-.75V63.3h-.75V64.2h-.75V63h-.75V63.4h-.75V62.9h-.75V63.9h-.75V62.9h-.75V63.1h-.75V63.2h-.75V65.9h-.75V64.3h-.75V66.7h-.75V67.1h-.75V69.7h-.75V70.2h-.75V68.6h-.75V68.7h-.75V70.4h-.75V72.8h-.75V69.4h-.75V68h-.75V70.4h-.75V69.6h-.75V70.7h-.75V70h-.75V70h-.75V67.4h-.75V67.3h-.75V69.1h-.75V68.6h-.75V67.9h-.75V69.8h-.75V66.7h-.75V68.4h-.75V67.6h-.75Z"/><path fill="#2d50d2" d="M175.5 59.6V46.7h.75V44.8h.75V37.9h.75V42.2h.75V35.6h.75V41.5h.75V39.4h.75V35.5h.75V39.2h.75V38.8h.75V40.9h.75V38.7h.75V39.2h.75V32.1h.75V34.8h.75V36.6h.75V31.5h.75V36.6h.75V32.2h.75V32.9h.75V35.6h.75V26.9h.75V32.5h.75V31.4h.75V32.4h.75V28.2h.75V29.9h.75V33.3h.75V30h.75V26h.75V30h.75V29.6h.75V23.5h.75V26.8h.75V30.1h.75V30.8h.75V35.4h.75V41.1h.75V49.5h.75V46.8h.75V48.1h.75V44.8h.75V42.9h.75V46.2h.75V43h.75V43.9h.75V39h.75V41.4h.75V41.9h.75V38.5h.75V36.7h.75V41.2h.75V37.8h.75V35.6h.75V27.9h.75V36.5h.75V36.4h.75V36.5h.75V37.1h.75V37.1h.75V32.3h.75V26.7h.75V26.9h.75V35.8h.75V35.6h.75V33.9h.75V29.1h.75V26.2h.75V35.6h.75V30.6h.75V24.1h.75V25.4h.75V23.5h.75V31h.75V31.3h.75V31.8h.75V34.5h.75V46.8h.75V45h.75V48h.75V47h.75V47.2h.75V49.7h.75V49.4h.75V45.5h.75V48.3h.75V49.2h.75V46h.75V47.6h.75V43.2h.75V38.9h.75V32.8h.75V35.6h.75V34.4h.75V34.3h.75V28h.75V31.1h.75V32.7h.75V35.2h.75V35.8h.75V36.1h.75V30.4h.75V37.7h.75V35.5h.75V30.2h.75V36.7h.75V30.6h.75V31h.75V27.2h.75V32h.75V34.4h.75V31.4h.75V33h.75V36.8h.75V35.5h.75V29.9h.75V36.5h.75V40.4h.75V47.4h.75V47.4h.75V45.6h.75V48h.75V48.6h.75V49.8h.75V47.2h.75V49h.75V47h.75V47.7h.75V47.3h.75V47.1h.75V46.3h.75V47.5h.75V44.6h.75V44h.75V42.9h.75V43.3h.75V39.2h.75V43.6h.75V38.6h.75V40.7h.75V43.7h.75V40.4h.75V40.6h.75V41.4h.75V43.1h.75V30h.75V30h.75V37h.75V35.4h.75V32.8h.75V25.7h.75V32.5h.75V31.2h.75V33.5h.75V31.3h.75V33.6h.75V35.2h.75V35.5h.75V31.7h.75V41.6h.75V47.2h.75V47.5h.75V59.6V70.7h-.75V76.1h-.75V79.7h-.75V90.4h-.75V90.3h-.75V88.3h-.75V85.5h-.75V91.6h-.75V86.5h-.75V92h-.75V94.3h-.75V94.4h-.75V84.4h-.75V93.1h-.75V86h-.75V87.4h-.75V79.6h-.75V85.8h-.75V78.7h-.75V78.2h-.75V79.7h-.75V76.8h-.75V77.6h-.75V81.7h-.75V80.8h-.75V77.5h-.75V80.1h-.75V76.5h-.75V78.1h-.75V82h-.75V73.6h-.75V73.1h-.75V75.7h-.75V72.2h-.75V72h-.75V75h-.75V71.5h-.75V72h-.75V70.6h-.75V73.9h-.75V72.5h-.75V70.7h-.75V72.2h-.75V85.7h-.75V83.8h-.75V88h-.75V85.2h-.75V92.9h-.75V90.5h-.75V96h-.75V89h-.75V88.1h-.75V89.3h-.75V84.2h-.75V83.6h-.75V90.2h-.75V92.2h-.75V89.5h-.75V85.5h-.75V88.3h-.75V87.5h-.75V90.2h-.75V83h-.75V83.6h-.75V82.3h-.75V86.6h-.75V85.3h-.75V85.5h-.75V87.4h-.75V87.4h-.75V88.9h-.75V86.9h-.75V75.1h-.75V80.7h-.75V71.9h-.75V75.4h-.75V73h-.75V71.5h-.75V72.8h-.75V73.2h-.75V70.4h-.75V70.6h-.75V74.6h-.75V71.9h-.75V75.6h-.75V85.4h-.75V94.4h-.75V86.5h-.75V93.8h-.75V87.9h-.75V98.5h-.75V92.1h-.75V91.8h-.75V85.7h-.75V87.3h-.75V89.7h-.75V92.3h-.75V86.2h-.75V87.2h-.75V93.3h-.75V88.6h-.75V84.4h-.75V83.9h-.75V92.8h-.75V84.8h-.75V86.4h-.75V87.7h-.75V86.4h-.75V90.2h-.75V81.3h-.75V87.5h-.75V79.2h-.75V83.2h-.75V82.3h-.75V83.1h-.75V80.6h-.75V76.6h-.75V74.1h-.75V76.4h-.75V71.8h-.75V73.2h-.75V73.8h-.75V70.3h-.75V71.1h-.75V70.6h-.75V94.8h-.75V88.1h-.75V90.3h-.75V93.2h-.75V92.7h-.75V100.6h-.75V100.6h-.75V100.8h-.75V90.1h-.75V91.4h-.75V92h-.75V90.2h-.75V87.2h-.75V89.9h-.75V89h-.75V86.4h-.75V95.5h-.75V85.7h-.75V87.6h-.75V86.8h-.75V85.5h-.75V84.9h-.75V89.3h-.75V82.3h-.75V82.8h-.75V80.9h-.75V79.5h-.75V80.5h-.75V86.9h-.75V82.4h-.75V80.5h-.75V80.5h-.75V83.5h-.75V82h-.75V77.2h-.75V75.2h-.75V74h-.75Z"/><path fill="#5070de" d="M175.5 59.6V51.1h.75V49.8h.75V45.3h.75V48.1h.75V43.8h.75V47.7h.75V46.3h.75V43.7h.75V46.1h.75V45.8h.75V47.3h.75V45.8h.75V46.1h.75V41.4h.75V43.2h.75V44.4h.75V41h.75V44.4h.75V41.5h.75V42h.75V43.8h.75V38h.75V41.7h.75V41h.75V41.7h.75V38.9h.75V40h.75V42.2h.75V40.1h.75V37.4h.75V40.1h.75V39.8h.75V35.7h.75V37.9h.75V40.1h.75V40.6h.75V43.6h.75V47.4h.75V53h.75V51.1h.75V52h.75V49.8h.75V48.5h.75V50.7h.75V48.7h.75V49.3h.75V46h.75V47.6h.75V47.9h.75V45.7h.75V44.5h.75V47.4h.75V45.2h.75V43.8h.75V38.7h.75V44.3h.75V44.3h.75V44.4h.75V44.7h.75V44.7h.75V41.6h.75V37.9h.75V38h.75V43.9h.75V43.8h.75V42.6h.75V39.5h.75V37.5h.75V43.7h.75V40.5h.75V36.1h.75V37h.75V35.8h.75V40.7h.75V40.9h.75V41.3h.75V43.1h.75V51.1h.75V49.9h.75V51.9h.75V51.3h.75V51.4h.75V53h.75V52.8h.75V50.3h.75V52.2h.75V52.7h.75V50.6h.75V51.7h.75V48.7h.75V45.9h.75V41.9h.75V43.7h.75V43h.75V42.9h.75V38.7h.75V40.8h.75V41.8h.75V43.5h.75V43.9h.75V44.1h.75V40.3h.75V45.2h.75V43.7h.75V40.2h.75V44.5h.75V40.5h.75V40.7h.75V38.2h.75V41.4h.75V42.9h.75V41h.75V42.1h.75V44.6h.75V43.7h.75V40h.75V44.4h.75V47h.75V51.6h.75V51.6h.75V50.4h.75V52h.75V52.3h.75V53.1h.75V51.4h.75V52.6h.75V51.3h.75V51.7h.75V51.5h.75V51.3h.75V50.8h.75V51.6h.75V49.7h.75V49.3h.75V48.6h.75V48.9h.75V46.1h.75V49h.75V45.8h.75V47.1h.75V49.1h.75V46.9h.75V47.1h.75V47.6h.75V48.7h.75V40.1h.75V40h.75V44.7h.75V43.6h.75V41.9h.75V37.2h.75V41.7h.75V40.9h.75V42.3h.75V40.9h.75V42.4h.75V43.5h.75V43.7h.75V41.2h.75V47.7h.75V51.4h.75V51.6h.75V59.6V66.9h-.75V70.5h-.75V72.8h-.75V79.9h-.75V79.8h-.75V78.6h-.75V76.7h-.75V80.7h-.75V77.3h-.75V81h-.75V82.5h-.75V82.5h-.75V76h-.75V81.7h-.75V77.1h-.75V77.9h-.75V72.8h-.75V76.9h-.75V72.2h-.75V71.9h-.75V72.9h-.75V71h-.75V71.5h-.75V74.2h-.75V73.6h-.75V71.4h-.75V73.2h-.75V70.7h-.75V71.8h-.75V74.4h-.75V68.9h-.75V68.5h-.75V70.2h-.75V67.9h-.75V67.8h-.75V69.8h-.75V67.5h-.75V67.8h-.75V66.9h-.75V69h-.75V68.1h-.75V66.9h-.75V67.9h-.75V76.9h-.75V75.6h-.75V78.3h-.75V76.5h-.75V81.6h-.75V80h-.75V83.6h-.75V79h-.75V78.4h-.75V79.2h-.75V75.9h-.75V75.5h-.75V79.8h-.75V81.1h-.75V79.3h-.75V76.7h-.75V78.5h-.75V78h-.75V79.8h-.75V75.1h-.75V75.4h-.75V74.6h-.75V77.4h-.75V76.6h-.75V76.7h-.75V78h-.75V77.9h-.75V78.9h-.75V77.6h-.75V69.8h-.75V73.5h-.75V67.7h-.75V70h-.75V68.4h-.75V67.4h-.75V68.3h-.75V68.6h-.75V66.7h-.75V66.8h-.75V69.5h-.75V67.7h-.75V70.1h-.75V76.6h-.75V82.6h-.75V77.3h-.75V82.1h-.75V78.3h-.75V85.3h-.75V81.1h-.75V80.9h-.75V76.9h-.75V77.9h-.75V79.4h-.75V81.2h-.75V77.2h-.75V77.8h-.75V81.9h-.75V78.7h-.75V76h-.75V75.6h-.75V81.5h-.75V76.3h-.75V77.3h-.75V78.1h-.75V77.3h-.75V79.8h-.75V73.9h-.75V78h-.75V72.6h-.75V75.2h-.75V74.6h-.75V75.1h-.75V73.5h-.75V70.8h-.75V69.2h-.75V70.7h-.75V67.7h-.75V68.6h-.75V69h-.75V66.7h-.75V67.2h-.75V66.9h-.75V82.8h-.75V78.4h-.75V79.9h-.75V81.8h-.75V81.5h-.75V86.7h-.75V86.7h-.75V86.8h-.75V79.7h-.75V80.6h-.75V81h-.75V79.8h-.75V77.8h-.75V79.6h-.75V79h-.75V77.3h-.75V83.3h-.75V76.8h-.75V78.1h-.75V77.6h-.75V76.7h-.75V76.3h-.75V79.2h-.75V74.6h-.75V74.9h-.75V73.7h-.75V72.7h-.75V73.4h-.75V77.6h-.75V74.6h-.75V73.4h-.75V73.4h-.75V75.3h-.75V74.4h-.75V71.2h-.75V69.9h-.75V69.1h-.75Z"/><path fill="#718ee4" d="M175.5 59.6V55.3h.75V54.7h.75V52.4h.75V53.8h.75V51.7h.75V53.6h.75V52.9h.75V51.7h.75V52.9h.75V52.7h.75V53.4h.75V52.7h.75V52.9h.75V50.5h.75V51.4h.75V52h.75V50.3h.75V52h.75V50.6h.75V50.8h.75V51.7h.75V48.8h.75V50.6h.75V50.3h.75V50.6h.75V49.2h.75V49.8h.75V50.9h.75V49.8h.75V48.5h.75V49.8h.75V49.7h.75V47.7h.75V48.8h.75V49.9h.75V50.1h.75V51.6h.75V53.5h.75V56.3h.75V55.4h.75V55.8h.75V54.7h.75V54.1h.75V55.2h.75V54.1h.75V54.4h.75V52.8h.75V53.6h.75V53.8h.75V52.7h.75V52.1h.75V53.5h.75V52.4h.75V51.7h.75V49.1h.75V52h.75V51.9h.75V52h.75V52.2h.75V52.2h.75V50.6h.75V48.8h.75V48.8h.75V51.8h.75V51.7h.75V51.1h.75V49.5h.75V48.6h.75V51.7h.75V50h.75V47.9h.75V48.3h.75V47.7h.75V50.2h.75V50.3h.75V50.4h.75V51.3h.75V55.4h.75V54.8h.75V55.8h.75V55.4h.75V55.5h.75V56.3h.75V56.2h.75V55h.75V55.9h.75V56.2h.75V55.1h.75V55.6h.75V54.2h.75V52.8h.75V50.7h.75V51.7h.75V51.3h.75V51.3h.75V49.2h.75V50.2h.75V50.7h.75V51.5h.75V51.7h.75V51.9h.75V50h.75V52.4h.75V51.6h.75V49.9h.75V52.1h.75V50h.75V50.1h.75V48.9h.75V50.5h.75V51.3h.75V50.3h.75V50.8h.75V52.1h.75V51.7h.75V49.8h.75V52h.75V53.3h.75V55.6h.75V55.6h.75V55h.75V55.8h.75V56h.75V56.4h.75V55.5h.75V56.1h.75V55.4h.75V55.7h.75V55.5h.75V55.5h.75V55.2h.75V55.6h.75V54.7h.75V54.5h.75V54.1h.75V54.2h.75V52.9h.75V54.3h.75V52.7h.75V53.4h.75V54.3h.75V53.3h.75V53.3h.75V53.6h.75V54.2h.75V49.8h.75V49.8h.75V52.1h.75V51.6h.75V50.7h.75V48.4h.75V50.7h.75V50.2h.75V51h.75V50.3h.75V51h.75V51.5h.75V51.6h.75V50.4h.75V53.7h.75V55.5h.75V55.6h.75V59.6V63.3h-.75V65.1h-.75V66.2h-.75V69.7h-.75V69.7h-.75V69.1h-.75V68.1h-.75V70.2h-.75V68.5h-.75V70.3h-.75V71h-.75V71.1h-.75V67.8h-.75V70.7h-.75V68.3h-.75V68.8h-.75V66.2h-.75V68.2h-.75V65.9h-.75V65.7h-.75V66.2h-.75V65.3h-.75V65.5h-.75V66.9h-.75V66.6h-.75V65.5h-.75V66.4h-.75V65.2h-.75V65.7h-.75V67h-.75V64.2h-.75V64.1h-.75V64.9h-.75V63.8h-.75V63.7h-.75V64.7h-.75V63.5h-.75V63.7h-.75V63.2h-.75V64.3h-.75V63.9h-.75V63.3h-.75V63.7h-.75V68.2h-.75V67.6h-.75V69h-.75V68.1h-.75V70.6h-.75V69.8h-.75V71.6h-.75V69.3h-.75V69h-.75V69.4h-.75V67.7h-.75V67.5h-.75V69.7h-.75V70.4h-.75V69.5h-.75V68.2h-.75V69.1h-.75V68.8h-.75V69.7h-.75V67.3h-.75V67.5h-.75V67.1h-.75V68.5h-.75V68.1h-.75V68.1h-.75V68.8h-.75V68.8h-.75V69.3h-.75V68.6h-.75V64.7h-.75V66.6h-.75V63.7h-.75V64.8h-.75V64h-.75V63.5h-.75V64h-.75V64.1h-.75V63.1h-.75V63.2h-.75V64.5h-.75V63.6h-.75V64.9h-.75V68.1h-.75V71.1h-.75V68.5h-.75V70.9h-.75V68.9h-.75V72.4h-.75V70.3h-.75V70.2h-.75V68.2h-.75V68.8h-.75V69.5h-.75V70.4h-.75V68.4h-.75V68.7h-.75V70.7h-.75V69.2h-.75V67.8h-.75V67.6h-.75V70.6h-.75V67.9h-.75V68.4h-.75V68.9h-.75V68.5h-.75V69.7h-.75V66.8h-.75V68.8h-.75V66.1h-.75V67.4h-.75V67.1h-.75V67.4h-.75V66.5h-.75V65.2h-.75V64.4h-.75V65.1h-.75V63.6h-.75V64.1h-.75V64.3h-.75V63.1h-.75V63.4h-.75V63.2h-.75V71.2h-.75V69h-.75V69.7h-.75V70.7h-.75V70.5h-.75V73.1h-.75V73.1h-.75V73.2h-.75V69.7h-.75V70.1h-.75V70.3h-.75V69.7h-.75V68.7h-.75V69.6h-.75V69.3h-.75V68.4h-.75V71.4h-.75V68.2h-.75V68.9h-.75V68.6h-.75V68.2h-.75V67.9h-.75V69.4h-.75V67.1h-.75V67.3h-.75V66.6h-.75V66.2h-.75V66.5h-.75V68.6h-.75V67.1h-.75V66.5h-.75V66.5h-.75V67.5h-.75V67h-.75V65.4h-.75V64.8h-.75V64.4h-.75Z"/><path fill="#2ac6c8" d="M297 59.6V44.9h.75V46.1h.75V47.8h.75V46.3h.75V45.9h.75V42h.75V46.3h.75V45.7h.75V40h.75V42.3h.75V39.9h.75V38.9h.75V39.1h.75V40.5h.75V41.6h.75V41h.75V39.5h.75V40.4h.75V38.6h.75V23.1h.75V36h.75V28.8h.75V27.3h.75V36.3h.75V33.6h.75V32.9h.75V30.3h.75V34.2h.75V29.1h.75V32.3h.75V37h.75V33h.75V28.9h.75V34.3h.75V33.1h.75V34.1h.75V35.4h.75V35.6h.75V27.1h.75V34.4h.75V42.2h.75V49.7h.75V48.1h.75V46.7h.75V47.4h.75V48.5h.75V32.2h.75V38.1h.75V33.3h.75V36.7h.75V41.4h.75V35.2h.75V39.8h.75V37.9h.75V33.1h.75V32.1h.75V36.7h.75V34.4h.75V35.6h.75V29.7h.75V36.6h.75V35.5h.75V32h.75V34.9h.75V30.1h.75V27.1h.75V29.4h.75V26.7h.75V33h.75V26.1h.75V27.1h.75V36.4h.75V37.5h.75V36.3h.75V33.7h.75V28.1h.75V34.2h.75V35.2h.75V32.3h.75V49.6h.75V46.6h.75V50.9h.75V51.1h.75V51.4h.75V50.4h.75V50.4h.75V51.4h.75V50.8h.75V49.1h.75V47.1h.75V39.8h.75V42h.75V38.5h.75V41.7h.75V40.6h.75V41.6h.75V39.7h.75V44.5h.75V41.4h.75V38.9h.75V39.2h.75V38.4h.75V42.1h.75V39h.75V36.4h.75V31.6h.75V27.1h.75V35.4h.75V34.8h.75V34.8h.75V30.5h.75V34.9h.75V35.7h.75V30h.75V37.5h.75V34h.75V42.5h.75V39.1h.75V40.9h.75V32.8h.75V37.4h.75V34.9h.75V42.5h.75V37.2h.75V42.8h.75V44.8h.75V42.9h.75V40.9h.75V41.1h.75V40.5h.75V44.4h.75V41.4h.75V42.8h.75V44.3h.75V39.2h.75V32.6h.75V28h.75V35.1h.75V27.9h.75V27.2h.75V43.7h.75V46.5h.75V47.2h.75V47.3h.75V44.7h.75V45.6h.75V43.2h.75V48h.75V33.3h.75V32.4h.75V27.9h.75V37.8h.75V32.2h.75V33.1h.75V29.7h.75V34.4h.75V28.5h.75V34.2h.75V33h.75V34.7h.75V29.1h.75V24.4h.75V49.2h.75V47.7h.75V48.5h.75V48h.75V47.9h.75V45.5h.75V45.2h.75V43.9h.75V42h.75V40.9h.75V43.1h.75V33.1h.75V40h.75V37.3h.75V34h.75V36.5h.75V34.6h.75V32.8h.75V35.2h.75V35.4h.75V29.7h.75V32.1h.75V27.8h.75V34.2h.75V30.3h.75V36.1h.75V28.7h.75V33.5h.75V32.7h.75V32.9h.75V33.9h.75V33.3h.75V34.9h.75V33h.75V22.5h.75V31.2h.75V34.6h.75V34.4h.75V37.9h.75V37.9h.75V46.1h.75V48.5h.75V44.6h.75V48.6h.75V46.7h.75V44.1h.75V46h.75V45.6h.75V40.8h.75V43.7h.75V45.4h.75V46.1h.75V45.7h.75V42h.75V47.2h.75V44.8h.75V45.3h.75V42.9h.75V46.3h.75V40.9h.75V42h.75V43.9h.75V42.9h.75V44.1h.75V44.9h.75V46.2h.75V41.1h.75V36.9h.75V28.6h.75V37.2h.75V32.8h.75V32.2h.75V37h.75V33.3h.75V25.1h.75V32.5h.75V25.6h.75V33h.75V35.4h.75V35.9h.75V34.3h.75V41.6h.75V45.7h.75V43.4h.75V48.3h.75V47.2h.75V47.6h.75V49.1h.75V49.2h.75V46.6h.75V48.7h.75V48.9h.75V48.2h.75V39.8h.75V25.4h.75V31.5h.75V25.6h.75V29.4h.75V28.5h.75V34.8h.75V38.1h.75V32.6h.75V59.6V82.7h-.75V85.3h-.75V85h-.75V85.8h-.75V87.3h-.75V92.9h-.75V89.3h-.75V95.6h-.75V75.8h-.75V71.9h-.75V72.2h-.75V71.5h-.75V70.3h-.75V72.2h-.75V72.9h-.75V74.8h-.75V72.1h-.75V72.7h-.75V76h-.75V73.1h-.75V81.3h-.75V87.9h-.75V85.9h-.75V94.4h-.75V97.8h-.75V88.4h-.75V85.9h-.75V95.6h-.75V84.9h-.75V92.2h-.75V86.8h-.75V88.8h-.75V92.8h-.75V88.2h-.75V84.5h-.75V81.5h-.75V81.4h-.75V75.3h-.75V79.4h-.75V76.2h-.75V78.7h-.75V76.9h-.75V76.5h-.75V74.9h-.75V75.6h-.75V77.1h-.75V76.5h-.75V73.8h-.75V74.8h-.75V73h-.75V77.6h-.75V74.3h-.75V75.5h-.75V76h-.75V74h-.75V76.2h-.75V75.6h-.75V72.7h-.75V72.4h-.75V71.7h-.75V73.4h-.75V71.2h-.75V87.8h-.75V82.3h-.75V83.3h-.75V84.6h-.75V85.7h-.75V88.8h-.75V87.8h-.75V87.9h-.75V87h-.75V85.6h-.75V87.8h-.75V90.8h-.75V87.4h-.75V89.6h-.75V84.6h-.75V92.3h-.75V87.1h-.75V91.1h-.75V94.1h-.75V87.1h-.75V89.8h-.75V86h-.75V90.5h-.75V83.8h-.75V84.1h-.75V88.1h-.75V91.2h-.75V83.7h-.75V86.1h-.75V75.9h-.75V77.7h-.75V74.5h-.75V77.5h-.75V77.4h-.75V79.4h-.75V72.8h-.75V71.6h-.75V71.7h-.75V72.4h-.75V71.7h-.75V75.9h-.75V95.8h-.75V86.8h-.75V92.7h-.75V85.4h-.75V88.5h-.75V86.5h-.75V85.2h-.75V85h-.75V86.9h-.75V84.7h-.75V92.5h-.75V85.8h-.75V90.1h-.75V84.3h-.75V75.5h-.75V73.3h-.75V72.5h-.75V75.1h-.75V76.8h-.75V75.9h-.75V74.7h-.75V88.4h-.75V90h-.75V91.8h-.75V86.1h-.75V89h-.75V87.9h-.75V76.5h-.75V76.3h-.75V76.5h-.75V76.9h-.75V76.3h-.75V76.5h-.75V75.1h-.75V79.2h-.75V74.6h-.75V76.5h-.75V78.5h-.75V79.1h-.75V85.3h-.75V83.5h-.75V87.5h-.75V89.2h-.75V82.4h-.75V79.5h-.75V84h-.75V86.9h-.75V89.1h-.75V92.5h-.75V83.6h-.75V87.7h-.75V84.9h-.75V85h-.75V88.1h-.75V87.1h-.75V91.6h-.75V82.1h-.75V81.1h-.75V83.8h-.75V76.1h-.75V77.9h-.75V76.6h-.75V82h-.75V78.5h-.75V78.8h-.75V78.6h-.75V88h-.75V76.8h-.75V77.9h-.75V82.2h-.75V76.7h-.75V73.2h-.75V69.9h-.75V70.1h-.75V71.3h-.75V68.4h-.75V69h-.75V69.9h-.75V69.9h-.75V69h-.75V71.2h-.75V72.4h-.75V79.7h-.75V92.5h-.75V92.4h-.75V88.8h-.75V84.9h-.75V91.8h-.75V90.1h-.75V89.5h-.75V88.2h-.75V89.7h-.75V87.2h-.75V92.8h-.75V91h-.75V86.8h-.75V95.9h-.75V83.9h-.75V86.4h-.75V83.5h-.75V85.3h-.75V84h-.75V86.5h-.75V82.4h-.75V86h-.75V89.1h-.75V86.9h-.75V83.7h-.75V84.7h-.75V79.6h-.75V83.8h-.75V82.2h-.75V84.2h-.75V87.4h-.75V74.6h-.75V74.2h-.75V71.4h-.75V72.9h-.75V69.6h-.75V76.8h-.75V86.6h-.75V90.3h-.75V94.5h-.75V83.8h-.75V83.3h-.75V91h-.75V92.9h-.75V84h-.75V99h-.75V86.4h-.75V90.4h-.75V84h-.75V86.1h-.75V92.7h-.75V92.8h-.75V87.1h-.75V85.8h-.75V95.1h-.75V85.9h-.75V90.3h-.75V83.5h-.75V89.4h-.75V88.2h-.75V81.3h-.75V82h-.75V77.5h-.75V83.9h-.75V79h-.75V77.1h-.75V78.9h-.75V77.5h-.75V81.6h-.75V77h-.75V78.8h-.75V77.2h-.75V77h-.75V76h-.75V73.9h-.75V72.4h-.75V70.8h-.75V72.5h-.75Z"/><path fill="#4ed2d4" d="M297 59.6V49.9h.75V50.7h.75V51.8h.75V50.8h.75V50.6h.75V48h.75V50.8h.75V50.4h.75V46.7h.75V48.2h.75V46.6h.75V46h.75V46.1h.75V47h.75V47.7h.75V47.3h.75V46.4h.75V46.9h.75V45.7h.75V35.5h.75V44.1h.75V39.3h.75V38.3h.75V44.2h.75V42.4h.75V42h.75V40.3h.75V42.8h.75V39.5h.75V41.6h.75V44.7h.75V42h.75V39.3h.75V42.9h.75V42.1h.75V42.8h.75V43.6h.75V43.8h.75V38.1h.75V42.9h.75V48.1h.75V53.1h.75V52h.75V51.1h.75V51.5h.75V52.3h.75V41.5h.75V45.4h.75V42.2h.75V44.5h.75V47.6h.75V43.5h.75V46.5h.75V45.3h.75V42.1h.75V41.4h.75V44.5h.75V43h.75V43.8h.75V39.9h.75V44.4h.75V43.7h.75V41.4h.75V43.3h.75V40.2h.75V38.2h.75V39.7h.75V37.9h.75V42h.75V37.5h.75V38.1h.75V44.3h.75V45h.75V44.2h.75V42.5h.75V38.8h.75V42.8h.75V43.5h.75V41.6h.75V53h.75V51h.75V53.8h.75V54h.75V54.2h.75V53.5h.75V53.5h.75V54.2h.75V53.8h.75V52.7h.75V51.4h.75V46.5h.75V48h.75V45.7h.75V47.8h.75V47.1h.75V47.7h.75V46.5h.75V49.6h.75V47.6h.75V45.9h.75V46.2h.75V45.6h.75V48.1h.75V46h.75V44.3h.75V41.2h.75V38.1h.75V43.6h.75V43.3h.75V43.2h.75V40.4h.75V43.3h.75V43.8h.75V40.1h.75V45h.75V42.7h.75V48.3h.75V46.1h.75V47.3h.75V41.9h.75V44.9h.75V43.3h.75V48.3h.75V44.8h.75V48.5h.75V49.8h.75V48.6h.75V47.3h.75V47.4h.75V47h.75V49.5h.75V47.6h.75V48.5h.75V49.5h.75V46.1h.75V41.8h.75V38.7h.75V43.4h.75V38.7h.75V38.2h.75V49.1h.75V51h.75V51.4h.75V51.5h.75V49.8h.75V50.4h.75V48.8h.75V51.9h.75V42.3h.75V41.6h.75V38.7h.75V45.2h.75V41.5h.75V42.1h.75V39.9h.75V43h.75V39.1h.75V42.8h.75V42h.75V43.2h.75V39.5h.75V36.4h.75V52.8h.75V51.8h.75V52.3h.75V52h.75V51.9h.75V50.3h.75V50.1h.75V49.3h.75V48h.75V47.2h.75V48.7h.75V42.1h.75V46.6h.75V44.9h.75V42.7h.75V44.4h.75V43.1h.75V41.9h.75V43.5h.75V43.6h.75V39.8h.75V41.4h.75V38.6h.75V42.8h.75V40.3h.75V44.1h.75V39.2h.75V42.4h.75V41.8h.75V42h.75V42.6h.75V42.2h.75V43.3h.75V42.1h.75V35.1h.75V40.8h.75V43.1h.75V42.9h.75V45.3h.75V45.3h.75V50.7h.75V52.3h.75V49.7h.75V52.3h.75V51.1h.75V49.4h.75V50.6h.75V50.4h.75V47.2h.75V49.1h.75V50.3h.75V50.7h.75V50.4h.75V48h.75V51.4h.75V49.9h.75V50.2h.75V48.6h.75V50.8h.75V47.3h.75V48h.75V49.3h.75V48.6h.75V49.4h.75V49.9h.75V50.7h.75V47.4h.75V44.6h.75V39.1h.75V44.8h.75V41.9h.75V41.5h.75V44.7h.75V42.3h.75V36.9h.75V41.7h.75V37.2h.75V42h.75V43.6h.75V44h.75V42.9h.75V47.7h.75V50.4h.75V48.9h.75V52.1h.75V51.4h.75V51.7h.75V52.7h.75V52.7h.75V51h.75V52.4h.75V52.5h.75V52h.75V46.5h.75V37h.75V41.1h.75V37.2h.75V39.7h.75V39.1h.75V43.2h.75V45.4h.75V41.8h.75V59.6V74.9h-.75V76.5h-.75V76.3h-.75V76.9h-.75V77.9h-.75V81.6h-.75V79.2h-.75V83.3h-.75V70.3h-.75V67.7h-.75V67.9h-.75V67.4h-.75V66.7h-.75V67.9h-.75V68.4h-.75V69.6h-.75V67.8h-.75V68.3h-.75V70.4h-.75V68.5h-.75V73.9h-.75V78.3h-.75V77h-.75V82.6h-.75V84.8h-.75V78.6h-.75V77h-.75V83.4h-.75V76.3h-.75V81.1h-.75V77.5h-.75V78.9h-.75V81.5h-.75V78.5h-.75V76.1h-.75V74.1h-.75V74h-.75V69.9h-.75V72.7h-.75V70.6h-.75V72.2h-.75V71h-.75V70.7h-.75V69.7h-.75V70.2h-.75V71.2h-.75V70.7h-.75V69h-.75V69.6h-.75V68.5h-.75V71.5h-.75V69.3h-.75V70.1h-.75V70.4h-.75V69.1h-.75V70.5h-.75V70.1h-.75V68.3h-.75V68h-.75V67.6h-.75V68.7h-.75V67.2h-.75V78.2h-.75V74.6h-.75V75.2h-.75V76.1h-.75V76.8h-.75V78.9h-.75V78.2h-.75V78.3h-.75V77.7h-.75V76.7h-.75V78.2h-.75V80.2h-.75V77.9h-.75V79.4h-.75V76.1h-.75V81.2h-.75V77.8h-.75V80.4h-.75V82.3h-.75V77.8h-.75V79.6h-.75V77h-.75V80h-.75V75.6h-.75V75.8h-.75V78.4h-.75V80.5h-.75V75.5h-.75V77.1h-.75V70.3h-.75V71.5h-.75V69.4h-.75V71.4h-.75V71.3h-.75V72.7h-.75V68.3h-.75V67.5h-.75V67.6h-.75V68.1h-.75V67.6h-.75V70.4h-.75V83.5h-.75V77.6h-.75V81.4h-.75V76.6h-.75V78.7h-.75V77.4h-.75V76.5h-.75V76.4h-.75V77.6h-.75V76.2h-.75V81.3h-.75V76.9h-.75V79.7h-.75V75.9h-.75V70.1h-.75V68.6h-.75V68.1h-.75V69.9h-.75V71h-.75V70.4h-.75V69.6h-.75V78.6h-.75V79.7h-.75V80.9h-.75V77.1h-.75V79h-.75V78.3h-.75V70.8h-.75V70.6h-.75V70.8h-.75V71h-.75V70.6h-.75V70.7h-.75V69.8h-.75V72.6h-.75V69.5h-.75V70.7h-.75V72.1h-.75V72.4h-.75V76.6h-.75V75.4h-.75V78h-.75V79.2h-.75V74.6h-.75V72.7h-.75V75.7h-.75V77.6h-.75V79.1h-.75V81.3h-.75V75.4h-.75V78.1h-.75V76.3h-.75V76.3h-.75V78.4h-.75V77.8h-.75V80.8h-.75V74.4h-.75V73.8h-.75V75.6h-.75V70.5h-.75V71.7h-.75V70.8h-.75V74.4h-.75V72.1h-.75V72.3h-.75V72.1h-.75V78.4h-.75V71h-.75V71.7h-.75V74.5h-.75V70.9h-.75V68.5h-.75V66.4h-.75V66.6h-.75V67.3h-.75V65.4h-.75V65.8h-.75V66.4h-.75V66.4h-.75V65.8h-.75V67.2h-.75V68.1h-.75V72.9h-.75V81.3h-.75V81.3h-.75V78.9h-.75V76.3h-.75V80.9h-.75V79.8h-.75V79.3h-.75V78.5h-.75V79.4h-.75V77.8h-.75V81.5h-.75V80.3h-.75V77.5h-.75V83.5h-.75V75.6h-.75V77.3h-.75V75.4h-.75V76.6h-.75V75.7h-.75V77.3h-.75V74.7h-.75V77h-.75V79.1h-.75V77.6h-.75V75.5h-.75V76.2h-.75V72.8h-.75V75.5h-.75V74.5h-.75V75.9h-.75V77.9h-.75V69.5h-.75V69.3h-.75V67.4h-.75V68.4h-.75V66.2h-.75V70.9h-.75V77.4h-.75V79.8h-.75V82.6h-.75V75.6h-.75V75.3h-.75V80.3h-.75V81.6h-.75V75.7h-.75V85.6h-.75V77.3h-.75V79.9h-.75V75.7h-.75V77.1h-.75V81.5h-.75V81.5h-.75V77.7h-.75V76.9h-.75V83h-.75V77h-.75V79.9h-.75V75.4h-.75V79.3h-.75V78.5h-.75V73.9h-.75V74.4h-.75V71.4h-.75V75.7h-.75V72.4h-.75V71.2h-.75V72.4h-.75V71.4h-.75V74.1h-.75V71.1h-.75V72.2h-.75V71.2h-.75V71.1h-.75V70.4h-.75V69h-.75V68h-.75V67h-.75V68.1h-.75Z"/><path fill="#73dcdf" d="M297 59.6V54.8h.75V55.1h.75V55.7h.75V55.2h.75V55.1h.75V53.8h.75V55.2h.75V55h.75V53.1h.75V53.9h.75V53.1h.75V52.8h.75V52.9h.75V53.3h.75V53.7h.75V53.5h.75V53h.75V53.3h.75V52.7h.75V47.6h.75V51.8h.75V49.5h.75V48.9h.75V51.9h.75V51h.75V50.8h.75V49.9h.75V51.2h.75V49.5h.75V50.6h.75V52.2h.75V50.8h.75V49.5h.75V51.3h.75V50.9h.75V51.2h.75V51.6h.75V51.7h.75V48.9h.75V51.3h.75V53.8h.75V56.3h.75V55.8h.75V55.3h.75V55.6h.75V56h.75V50.6h.75V52.5h.75V50.9h.75V52h.75V53.6h.75V51.6h.75V53.1h.75V52.5h.75V50.8h.75V50.5h.75V52h.75V51.3h.75V51.7h.75V49.7h.75V52h.75V51.7h.75V50.5h.75V51.4h.75V49.9h.75V48.9h.75V49.6h.75V48.7h.75V50.8h.75V48.6h.75V48.9h.75V51.9h.75V52.3h.75V51.9h.75V51.1h.75V49.2h.75V51.2h.75V51.5h.75V50.6h.75V56.3h.75V55.3h.75V56.7h.75V56.8h.75V56.9h.75V56.5h.75V56.6h.75V56.9h.75V56.7h.75V56.1h.75V55.5h.75V53.1h.75V53.8h.75V52.6h.75V53.7h.75V53.3h.75V53.7h.75V53h.75V54.6h.75V53.6h.75V52.8h.75V52.9h.75V52.6h.75V53.8h.75V52.8h.75V51.9h.75V50.4h.75V48.9h.75V51.6h.75V51.4h.75V51.4h.75V50h.75V51.4h.75V51.7h.75V49.8h.75V52.3h.75V51.2h.75V54h.75V52.8h.75V53.4h.75V50.7h.75V52.3h.75V51.4h.75V54h.75V52.2h.75V54.1h.75V54.7h.75V54.1h.75V53.4h.75V53.5h.75V53.3h.75V54.6h.75V53.6h.75V54.1h.75V54.5h.75V52.9h.75V50.7h.75V49.2h.75V51.5h.75V49.1h.75V48.9h.75V54.3h.75V55.3h.75V55.5h.75V55.5h.75V54.7h.75V55h.75V54.2h.75V55.8h.75V50.9h.75V50.6h.75V49.2h.75V52.4h.75V50.6h.75V50.9h.75V49.7h.75V51.3h.75V49.4h.75V51.2h.75V50.8h.75V51.4h.75V49.5h.75V48h.75V56.2h.75V55.7h.75V55.9h.75V55.8h.75V55.7h.75V55h.75V54.8h.75V54.4h.75V53.8h.75V53.4h.75V54.2h.75V50.8h.75V53.1h.75V52.2h.75V51.2h.75V52h.75V51.4h.75V50.8h.75V51.6h.75V51.6h.75V49.7h.75V50.5h.75V49.1h.75V51.2h.75V49.9h.75V51.8h.75V49.4h.75V51h.75V50.7h.75V50.8h.75V51.1h.75V50.9h.75V51.4h.75V50.8h.75V47.4h.75V50.2h.75V51.3h.75V51.3h.75V52.4h.75V52.5h.75V55.1h.75V55.9h.75V54.7h.75V56h.75V55.4h.75V54.5h.75V55.1h.75V55h.75V53.4h.75V54.3h.75V54.9h.75V55.2h.75V55h.75V53.8h.75V55.5h.75V54.7h.75V54.9h.75V54.1h.75V55.2h.75V53.4h.75V53.8h.75V54.4h.75V54.1h.75V54.5h.75V54.7h.75V55.2h.75V53.5h.75V52.1h.75V49.4h.75V52.2h.75V50.8h.75V50.6h.75V52.1h.75V50.9h.75V48.2h.75V50.6h.75V48.4h.75V50.8h.75V51.6h.75V51.8h.75V51.3h.75V53.7h.75V55h.75V54.3h.75V55.9h.75V55.5h.75V55.7h.75V56.1h.75V56.2h.75V55.3h.75V56h.75V56.1h.75V55.8h.75V53.1h.75V48.3h.75V50.3h.75V48.4h.75V49.6h.75V49.3h.75V51.4h.75V52.5h.75V50.7h.75V59.6V67.2h-.75V68.1h-.75V68h-.75V68.2h-.75V68.7h-.75V70.6h-.75V69.4h-.75V71.5h-.75V65h-.75V63.6h-.75V63.7h-.75V63.5h-.75V63.1h-.75V63.8h-.75V64h-.75V64.6h-.75V63.7h-.75V63.9h-.75V65h-.75V64.1h-.75V66.8h-.75V68.9h-.75V68.3h-.75V71.1h-.75V72.2h-.75V69.1h-.75V68.3h-.75V71.5h-.75V68h-.75V70.4h-.75V68.6h-.75V69.2h-.75V70.5h-.75V69h-.75V67.8h-.75V66.8h-.75V66.8h-.75V64.8h-.75V66.1h-.75V65.1h-.75V65.9h-.75V65.3h-.75V65.2h-.75V64.7h-.75V64.9h-.75V65.4h-.75V65.2h-.75V64.3h-.75V64.6h-.75V64h-.75V65.5h-.75V64.5h-.75V64.9h-.75V65h-.75V64.4h-.75V65.1h-.75V64.9h-.75V63.9h-.75V63.8h-.75V63.6h-.75V64.2h-.75V63.4h-.75V68.9h-.75V67.1h-.75V67.4h-.75V67.9h-.75V68.2h-.75V69.2h-.75V68.9h-.75V68.9h-.75V68.6h-.75V68.2h-.75V68.9h-.75V69.9h-.75V68.8h-.75V69.5h-.75V67.8h-.75V70.4h-.75V68.7h-.75V70h-.75V71h-.75V68.7h-.75V69.6h-.75V68.3h-.75V69.8h-.75V67.6h-.75V67.7h-.75V69h-.75V70h-.75V67.5h-.75V68.3h-.75V65h-.75V65.6h-.75V64.5h-.75V65.5h-.75V65.5h-.75V66.1h-.75V64h-.75V63.6h-.75V63.6h-.75V63.8h-.75V63.6h-.75V65h-.75V71.5h-.75V68.6h-.75V70.5h-.75V68.1h-.75V69.1h-.75V68.5h-.75V68h-.75V68h-.75V68.6h-.75V67.9h-.75V70.4h-.75V68.2h-.75V69.7h-.75V67.7h-.75V64.9h-.75V64.1h-.75V63.8h-.75V64.7h-.75V65.3h-.75V65h-.75V64.6h-.75V69.1h-.75V69.6h-.75V70.2h-.75V68.3h-.75V69.3h-.75V68.9h-.75V65.2h-.75V65.1h-.75V65.2h-.75V65.3h-.75V65.1h-.75V65.2h-.75V64.7h-.75V66.1h-.75V64.5h-.75V65.2h-.75V65.8h-.75V66h-.75V68.1h-.75V67.5h-.75V68.8h-.75V69.4h-.75V67.1h-.75V66.2h-.75V67.6h-.75V68.6h-.75V69.3h-.75V70.5h-.75V67.5h-.75V68.9h-.75V67.9h-.75V68h-.75V69h-.75V68.7h-.75V70.2h-.75V67h-.75V66.7h-.75V67.6h-.75V65h-.75V65.6h-.75V65.2h-.75V67h-.75V65.8h-.75V65.9h-.75V65.9h-.75V69h-.75V65.3h-.75V65.6h-.75V67.1h-.75V65.2h-.75V64.1h-.75V63h-.75V63.1h-.75V63.5h-.75V62.5h-.75V62.7h-.75V63h-.75V63h-.75V62.7h-.75V63.4h-.75V63.8h-.75V66.2h-.75V70.5h-.75V70.4h-.75V69.2h-.75V67.9h-.75V70.2h-.75V69.7h-.75V69.5h-.75V69h-.75V69.5h-.75V68.7h-.75V70.5h-.75V70h-.75V68.6h-.75V71.6h-.75V67.6h-.75V68.4h-.75V67.5h-.75V68.1h-.75V67.7h-.75V68.5h-.75V67.1h-.75V68.3h-.75V69.3h-.75V68.6h-.75V67.6h-.75V67.9h-.75V66.2h-.75V67.6h-.75V67.1h-.75V67.7h-.75V68.8h-.75V64.6h-.75V64.4h-.75V63.5h-.75V64h-.75V62.9h-.75V65.3h-.75V68.5h-.75V69.7h-.75V71.1h-.75V67.6h-.75V67.4h-.75V70h-.75V70.6h-.75V67.7h-.75V72.6h-.75V68.4h-.75V69.8h-.75V67.7h-.75V68.4h-.75V70.5h-.75V70.6h-.75V68.7h-.75V68.2h-.75V71.3h-.75V68.3h-.75V69.7h-.75V67.5h-.75V69.5h-.75V69.1h-.75V66.8h-.75V67h-.75V65.5h-.75V67.6h-.75V66h-.75V65.4h-.75V66h-.75V65.5h-.75V66.9h-.75V65.3h-.75V65.9h-.75V65.4h-.75V65.3h-.75V65h-.75V64.3h-.75V63.8h-.75V63.3h-.75V63.9h-.75Z"/><path fill="#dcdcdc" d="M495 59.6V41.2h.75V39.3h.75V32.6h.75V33h.75V38.1h.75V37.3h.75V30.5h.75V35.7h.75V30.8h.75V32.3h.75V24.6h.75V34h.75V25.4h.75V27.3h.75V24.1h.75V27.3h.75V33.1h.75V33.4h.75V28.9h.75V37.6h.75V31.5h.75V47.5h.75V48.2h.75V49h.75V49.8h.75V50.7h.75V50.5h.75V51.2h.75V49.8h.75V49.3h.75V49.8h.75V51.7h.75V51.8h.75V51.1h.75V50.9h.75V39.6h.75V41.7h.75V40h.75V47.8h.75V45h.75V43h.75V45.8h.75V43.4h.75V40.2h.75V41.8h.75V39.1h.75V31.2h.75V34.1h.75V37.2h.75V38.3h.75V41h.75V39.5h.75V36.7h.75V37.4h.75V38.2h.75V37.1h.75V24.1h.75V30.7h.75V28h.75V25.7h.75V39.5h.75V41.3h.75V41.4h.75V47.1h.75V45.6h.75V45h.75V45.4h.75V47.6h.75V45.9h.75V44.7h.75V37.2h.75V37.7h.75V40.1h.75V41.2h.75V42.9h.75V40.3h.75V38.3h.75V36.2h.75V29.8h.75V33.7h.75V31.6h.75V33.9h.75V33.6h.75V26.5h.75V25.6h.75V33.2h.75V33.5h.75V33.9h.75V29.2h.75V28.4h.75V35.1h.75V33h.75V25.7h.75V32.8h.75V31.4h.75V20.4h.75V29.8h.75V27.4h.75V32.4h.75V30h.75V27.1h.75V30.5h.75V39.6h.75V41.8h.75V41h.75V46.2h.75V46.5h.75V45.9h.75V47.2h.75V47.2h.75V43h.75V43.3h.75V41.6h.75V40.4h.75V38.7h.75V38.9h.75V37.1h.75V40.7h.75V41.5h.75V40.1h.75V40h.75V40.1h.75V39h.75V32.5h.75V36.6h.75V36.4h.75V34.4h.75V29.1h.75V34.2h.75V34.1h.75V28.2h.75V30.6h.75V31.6h.75V33.5h.75V32.3h.75V26h.75V31.5h.75V32.3h.75V32.3h.75V31.1h.75V34.8h.75V35.3h.75V29.5h.75V42.9h.75V48.9h.75V50.8h.75V49.9h.75V50.4h.75V50.5h.75V51.3h.75V44.8h.75V46.7h.75V45.6h.75V40.1h.75V39h.75V41h.75V37.6h.75V37.6h.75V27.7h.75V29.4h.75V39.1h.75V36.4h.75V42.2h.75V36h.75V41h.75V42.3h.75V40.8h.75V37.3h.75V34h.75V38.4h.75V59.6V83.1h-.75V82.8h-.75V79h-.75V78.9h-.75V84.3h-.75V78.9h-.75V79.4h-.75V83.8h-.75V87h-.75V81.9h-.75V85.7h-.75V88h-.75V81.6h-.75V86.7h-.75V79.3h-.75V78.5h-.75V76.8h-.75V76.6h-.75V74.4h-.75V69.1h-.75V68.4h-.75V71.6h-.75V71.6h-.75V71h-.75V72.9h-.75V80.5h-.75V88.4h-.75V90.5h-.75V85.3h-.75V85.8h-.75V85.1h-.75V92.4h-.75V84.9h-.75V86.4h-.75V96.3h-.75V88.6h-.75V100.5h-.75V88.1h-.75V97h-.75V85.3h-.75V86.7h-.75V87.4h-.75V93.5h-.75V91.7h-.75V84.9h-.75V84.2h-.75V80.3h-.75V87.2h-.75V80.7h-.75V85.9h-.75V82.2h-.75V84.6h-.75V80.5h-.75V84.6h-.75V78.3h-.75V77h-.75V79.4h-.75V83.4h-.75V78.2h-.75V75.6h-.75V73.1h-.75V76.1h-.75V71.7h-.75V72.2h-.75V79.6h-.75V78.6h-.75V76.9h-.75V84.6h-.75V91.9h-.75V86.4h-.75V87.6h-.75V90.4h-.75V93.2h-.75V95.5h-.75V102.3h-.75V92.6h-.75V89.3h-.75V89.2h-.75V88.1h-.75V92.5h-.75V96.2h-.75V90h-.75V89.1h-.75V93.4h-.75V89.7h-.75V93.9h-.75V90.9h-.75V90.6h-.75V92.3h-.75V93.8h-.75V91.3h-.75V86.8h-.75V85.8h-.75V91.7h-.75V81.1h-.75V77.7h-.75V81.4h-.75V79.6h-.75V77.7h-.75V83h-.75V83.1h-.75V79.5h-.75V75.8h-.75V72.5h-.75V72.7h-.75V72.5h-.75V76.9h-.75V73.2h-.75V75.4h-.75V85.1h-.75V88.6h-.75V91.7h-.75V90.5h-.75V95.4h-.75V89.4h-.75V80.3h-.75V82.2h-.75V87.8h-.75V81.4h-.75V80.1h-.75V85.9h-.75V88.5h-.75V86.2h-.75V89.9h-.75V90.5h-.75V75.3h-.75V75.4h-.75V74.8h-.75V78.4h-.75V73.7h-.75V75h-.75V72.1h-.75V81h-.75V75.3h-.75V75.2h-.75V69.6h-.75V68.8h-.75V68h-.75V70.5h-.75V67.5h-.75V67.2h-.75V68.6h-.75V70.4h-.75V69.1h-.75V71.6h-.75V69.1h-.75V70.1h-.75V70.7h-.75V73.7h-.75V79.1h-.75V89.4h-.75V85.9h-.75V89.4h-.75V87.3h-.75V88.8h-.75V89.5h-.75V87.8h-.75V91.1h-.75V97.1h-.75V89.6h-.75V89h-.75V88.2h-.75V94h-.75V92.9h-.75V89.6h-.75V84.6h-.75V83.7h-.75V79.8h-.75V81.1h-.75V83.7h-.75Z"/><rect x="388" y="0" width="1.2" height="120.5" fill="#ff4556"/><path d="M385.8 0h5.6l-2.8 4.4z" fill="#ff0d18"/></svg>
<div class="lbl" style="left:3.5px">Sleepless-2019-01-29_0101_tl_54_7Days...</div>
<div class="lbl" style="left:177.2px">Sleepless-2019-01-29_0101...</div>
<div class="lbl" style="left:299.6px">Sleepless-2019-01-29_0101_tl_54_7DaysMon22...</div>
<div class="sb"></div><div class="thumb"></div>
<div class="tb"></div>
<div class="btn" style="left:4.3px;width:29.2px"><div style="position:absolute;left:1.5px;top:1.5px;right:1.5px;bottom:1.5px;border:1px dotted #c2bcb6;border-radius:2.5px"></div></div>
<div class="txt" style="left:37.8px;top:273.5px">Cursor position:</div>
<div class="spin"><div class="vd" style="left:47.5px"></div><div class="vd" style="left:76.5px"></div></div>
<div class="txt" style="left:119.2px;top:273.5px">482388</div>
<div class="btn" style="left:221.5px;width:87.2px"><div class="vd" style="left:28.3px;background:#cdc7c2"></div><div class="vd" style="left:57.8px;background:#cdc7c2"></div></div>
<div class="btn" style="left:519.7px;width:28.5px"></div>
<div class="btn" style="left:557.3px;width:29px"></div>
<div class="btn" style="left:591.2px;width:28.5px"></div>
<div style="position:absolute;left:552.6px;top:268px;width:1px;height:24px;background:#e3e0dd"></div>
<svg width="624" height="37" viewBox="0 262 624 37" style="left:0;top:262px">
 <g fill="#2e3436">
  <path d="M15.4 275.6v8.2l7.8-4.1z"/>
  <rect x="170" y="278.95" width="8.6" height="1.6"/>
  <rect x="198.1" y="278.95" width="8.6" height="1.6"/><rect x="201.6" y="275.45" width="1.6" height="8.6"/>
  <path d="M236 276.1v7.1l-5.9-3.55zM241.7 276.1v7.1l-5.9-3.55z"/>
  <path d="M288.8 276.1v7.1l5.9-3.55zM294.5 276.1v7.1l5.9-3.55z"/>
  <rect x="567.2" y="278.85" width="9.4" height="1.7"/><rect x="571.05" y="275" width="1.7" height="9.4"/>
  <rect x="600.7" y="278.85" width="9.4" height="1.7"/>
 </g>
 <circle cx="264.9" cy="278.9" r="5.2" fill="none" stroke="#2e3436" stroke-width="1.5"/>
 <path d="M262 276.6l3.1 2.4 3 .8" fill="none" stroke="#2e3436" stroke-width="1.3"/>
 <!-- scissors -->
 <g fill="none" stroke="#2e3436" stroke-width="1.6">
  <circle cx="530.3" cy="276.6" r="1.7"/><circle cx="530.3" cy="283.2" r="1.7"/>
  <path d="M531.6 277.7l7.6 6.3M531.6 282.1l7.6-6.3"/>
 </g>
</svg>
<div class="tbl"></div>
<div class="hl"></div>
<div class="cd" style="left:44.7px"></div><div class="cd" style="left:477px"></div><div class="cd" style="left:527.3px"></div><div class="cd" style="left:578.4px"></div>
<div class="th" style="left:10.2px">Write</div><div class="th" style="left:50.6px">File Name</div><div class="th" style="left:482.4px">Time</div><div class="th" style="left:533px">Duration</div><div class="th" style="left:584px">Offset</div>
<div class="row" style="top:318.40px"><span class="cb on"><svg viewBox="0 0 13 13" width="13" height="13"><path d="M3.4 6.2L6.5 9 11.6 3.4" fill="none" stroke="#fff" stroke-width="2.1" stroke-linecap="butt" stroke-linejoin="miter"/></svg></span><span class="fn">Sleepless-2019-01-29_0101_tl_54_7DaysMon22_71906-01</span><span class="tm">0:00.00</span><span class="du">21:50.47</span><span class="of">0</span></div>
<div class="row" style="top:336.35px"><span class="cb on"><svg viewBox="0 0 13 13" width="13" height="13"><path d="M3.4 6.2L6.5 9 11.6 3.4" fill="none" stroke="#fff" stroke-width="2.1" stroke-linecap="butt" stroke-linejoin="miter"/></svg></span><span class="fn">Sleepless-2019-01-29_0101_tl_54_7DaysMon22_71906-02</span><span class="tm">21:50.47</span><span class="du">19:25.32</span><span class="of">98297</span></div>
<div class="row" style="top:354.30px"><span class="cb on"><svg viewBox="0 0 13 13" width="13" height="13"><path d="M3.4 6.2L6.5 9 11.6 3.4" fill="none" stroke="#fff" stroke-width="2.1" stroke-linecap="butt" stroke-linejoin="miter"/></svg></span><span class="fn">Sleepless-2019-01-29_0101_tl_54_7DaysMon22_71906-03</span><span class="tm">41:16.04</span><span class="du">11:25.55</span><span class="of">185704</span></div>
<div class="row" style="top:372.25px"><span class="cb on"><svg viewBox="0 0 13 13" width="13" height="13"><path d="M3.4 6.2L6.5 9 11.6 3.4" fill="none" stroke="#fff" stroke-width="2.1" stroke-linecap="butt" stroke-linejoin="miter"/></svg></span><span class="fn">Sleepless-2019-01-29_0101_tl_54_7DaysMon22_71906-04</span><span class="tm">52:41.59</span><span class="du">9:51.70</span><span class="of">237134</span></div>
<div class="row" style="top:390.20px"><span class="cb on"><svg viewBox="0 0 13 13" width="13" height="13"><path d="M3.4 6.2L6.5 9 11.6 3.4" fill="none" stroke="#fff" stroke-width="2.1" stroke-linecap="butt" stroke-linejoin="miter"/></svg></span><span class="fn">Sleepless-2019-01-29_0101_tl_54_7DaysMon22_71906-05</span><span class="tm">62:33.54</span><span class="du">3:42.74</span><span class="of">281529</span></div>
<div class="row" style="top:408.15px"><span class="cb"></span><span class="fn">Sleepless-2019-01-29_0101_tl_54_7DaysMon22_71906-06</span><span class="tm">66:16.53</span><span class="du">12:01.67</span><span class="of">298253</span></div>
<div class="row" style="top:426.10px"><span class="cb on"><svg viewBox="0 0 13 13" width="13" height="13"><path d="M3.4 6.2L6.5 9 11.6 3.4" fill="none" stroke="#fff" stroke-width="2.1" stroke-linecap="butt" stroke-linejoin="miter"/></svg></span><span class="fn">Sleepless-2019-01-29_0101_tl_54_7DaysMon22_71906-07</span><span class="tm">78:18.45</span><span class="du">8:47.45</span><span class="of">352395</span></div>
<div class="row" style="top:444.05px"><span class="cb on"><svg viewBox="0 0 13 13" width="13" height="13"><path d="M3.4 6.2L6.5 9 11.6 3.4" fill="none" stroke="#fff" stroke-width="2.1" stroke-linecap="butt" stroke-linejoin="miter"/></svg></span><span class="fn">Sleepless-2019-01-29_0101_tl_54_7DaysMon22_71906-08</span><span class="tm">87:06.15</span><span class="du">20:02.11</span><span class="of">391965</span></div>
<div class="row" style="top:462.00px"><span class="cb on"><svg viewBox="0 0 13 13" width="13" height="13"><path d="M3.4 6.2L6.5 9 11.6 3.4" fill="none" stroke="#fff" stroke-width="2.1" stroke-linecap="butt" stroke-linejoin="miter"/></svg></span><span class="fn">Sleepless-2019-01-29_0101_tl_54_7DaysMon22_71906-09</span><span class="tm">107:08.26</span><span class="du">0:02.00</span><span class="of">482126</span></div>
<div class="row sel" style="top:479.95px"><span class="cb on"><svg viewBox="0 0 13 13" width="13" height="13"><path d="M3.4 6.2L6.5 9 11.6 3.4" fill="none" stroke="#fff" stroke-width="2.1" stroke-linecap="butt" stroke-linejoin="miter"/></svg></span><span class="fn">Sleepless-2019-01-29_0101_tl_54_7DaysMon22_71906-10</span><span class="tm">107:10.26</span><span class="du">0:03.19</span><span class="of">482276</span></div>
<div class="row" style="top:497.90px"><span class="cb"></span><span class="fn">Sleepless-2019-01-29_0101_tl_54_7DaysMon22_71906-11</span><span class="tm">107:13.45</span><span class="du">11:29.46</span><span class="of">482520</span></div>

<div class="edge" style="left:0;top:39px;width:1px;height:492px;background:#dcd9d6"></div><div class="edge" style="left:0;top:39px;width:1px;height:223px;background:#cbc7c3"></div>
<div class="edge" style="left:623px;top:39px;width:1px;height:492px;background:#e2dfdc"></div><div class="edge" style="left:623px;top:39px;width:1px;height:223px;background:#cfcbc7"></div>
</div>
</body></html>
